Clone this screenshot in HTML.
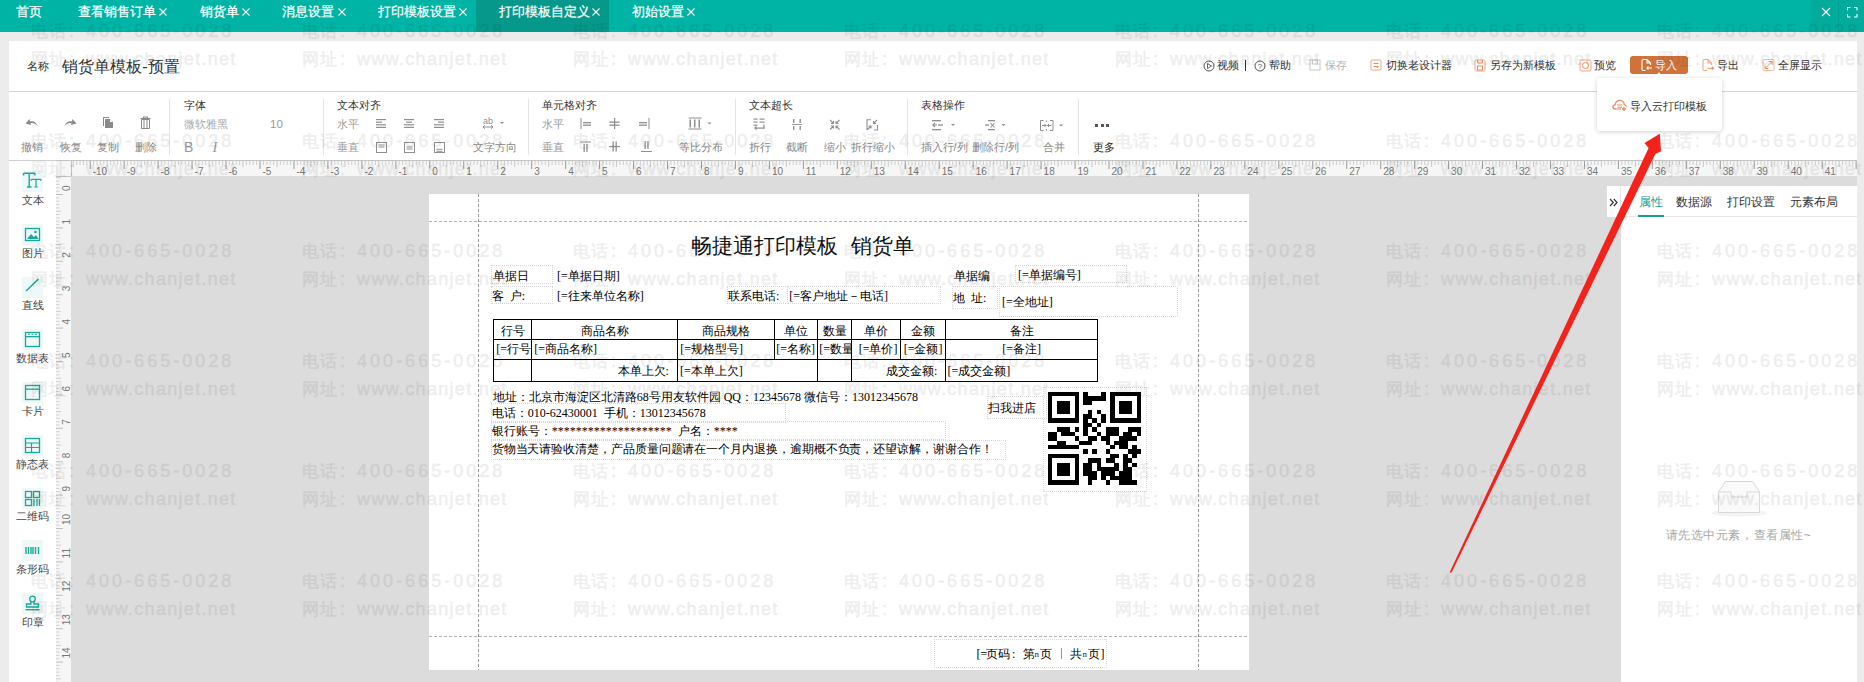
<!DOCTYPE html><html><head><meta charset="utf-8"><style>
html,body{margin:0;padding:0;width:1864px;height:682px;overflow:hidden;background:#ececec;position:relative;font-family:"Liberation Sans",sans-serif}
div{box-sizing:border-box}
</style></head><body>
<div style="position:absolute;left:0px;top:0px;width:1864px;height:32px;background:#00b4a5"></div>
<div style="position:absolute;left:476px;top:0px;width:133px;height:32px;background:#07988c"></div>
<div style="position:absolute;left:1811px;top:0px;width:27px;height:32px;background:#03ab9d"></div>
<div style="position:absolute;left:1838px;top:0px;width:26px;height:32px;background:#03ab9d;border-left:1px solid #00a194"></div>
<div style="position:absolute;left:15.8px;top:2.5px;line-height:19.049999999999997px;font-size:12.7px;color:#fff;font-family:'Liberation Sans', sans-serif;white-space:nowrap;-webkit-text-stroke:0.2px #fff">首页</div>
<div style="position:absolute;left:78.2px;top:2.5px;line-height:19.049999999999997px;font-size:12.7px;color:#fff;font-family:'Liberation Sans', sans-serif;white-space:nowrap;-webkit-text-stroke:0.2px #fff">查看销售订单</div>
<svg style="position:absolute;left:159px;top:8px" width="8" height="8"><path d="M0.5 0.5L7.5 7.5M7.5 0.5L0.5 7.5" stroke="#fff" stroke-width="1.1"/></svg>
<div style="position:absolute;left:199.9px;top:2.5px;line-height:19.049999999999997px;font-size:12.7px;color:#fff;font-family:'Liberation Sans', sans-serif;white-space:nowrap;-webkit-text-stroke:0.2px #fff">销货单</div>
<svg style="position:absolute;left:242px;top:8px" width="8" height="8"><path d="M0.5 0.5L7.5 7.5M7.5 0.5L0.5 7.5" stroke="#fff" stroke-width="1.1"/></svg>
<div style="position:absolute;left:282.0px;top:2.5px;line-height:19.049999999999997px;font-size:12.7px;color:#fff;font-family:'Liberation Sans', sans-serif;white-space:nowrap;-webkit-text-stroke:0.2px #fff">消息设置</div>
<svg style="position:absolute;left:338px;top:8px" width="8" height="8"><path d="M0.5 0.5L7.5 7.5M7.5 0.5L0.5 7.5" stroke="#fff" stroke-width="1.1"/></svg>
<div style="position:absolute;left:377.5px;top:2.5px;line-height:19.049999999999997px;font-size:12.7px;color:#fff;font-family:'Liberation Sans', sans-serif;white-space:nowrap;-webkit-text-stroke:0.2px #fff">打印模板设置</div>
<svg style="position:absolute;left:459px;top:8px" width="8" height="8"><path d="M0.5 0.5L7.5 7.5M7.5 0.5L0.5 7.5" stroke="#fff" stroke-width="1.1"/></svg>
<div style="position:absolute;left:498.5px;top:2.5px;line-height:19.049999999999997px;font-size:12.7px;color:#fff;font-family:'Liberation Sans', sans-serif;white-space:nowrap;-webkit-text-stroke:0.2px #fff">打印模板自定义</div>
<svg style="position:absolute;left:592px;top:8px" width="8" height="8"><path d="M0.5 0.5L7.5 7.5M7.5 0.5L0.5 7.5" stroke="#fff" stroke-width="1.1"/></svg>
<div style="position:absolute;left:632.0px;top:2.5px;line-height:19.049999999999997px;font-size:12.7px;color:#fff;font-family:'Liberation Sans', sans-serif;white-space:nowrap;-webkit-text-stroke:0.2px #fff">初始设置</div>
<svg style="position:absolute;left:687px;top:8px" width="8" height="8"><path d="M0.5 0.5L7.5 7.5M7.5 0.5L0.5 7.5" stroke="#fff" stroke-width="1.1"/></svg>
<svg style="position:absolute;left:1821px;top:7px" width="10" height="10"><path d="M1 1L9 9M9 1L1 9" stroke="#fff" stroke-width="1.2"/></svg>
<svg style="position:absolute;left:1846px;top:6px" width="12" height="12"><path d="M1.5 4.5V1.5H4.5M8 1.5H11V4.5M11 8V11H8M4.5 11H1.5V8" stroke="#fff" stroke-width="1.1" fill="none"/></svg>
<div style="position:absolute;left:9px;top:41px;width:1848px;height:119px;background:#fff"></div>
<div style="position:absolute;left:9px;top:91px;width:1848px;height:1px;background:#d4d4d4"></div>
<div style="position:absolute;left:9px;top:160px;width:1848px;height:1px;background:#cfcfcf"></div>
<div style="position:absolute;left:27.0px;top:58.0px;line-height:16.5px;font-size:11px;color:#333;font-family:'Liberation Sans', sans-serif;white-space:nowrap;">名称</div>
<div style="position:absolute;left:62.3px;top:53.7px;line-height:24.599999999999998px;font-size:16.4px;color:#333;font-family:'Liberation Sans', sans-serif;white-space:nowrap;">销货单模板-预置</div>
<svg style="position:absolute;left:1203px;top:60px;" width="12" height="12" viewBox="0 0 12 12"><circle cx="6" cy="6" r="5" fill="none" stroke="#555" stroke-width="1"/><path d="M4.5 3.5L8.5 6L4.5 8.5Z" fill="none" stroke="#555" stroke-width="0.9"/></svg>
<div style="position:absolute;left:1217.0px;top:57.2px;line-height:16.5px;font-size:11px;color:#333;font-family:'Liberation Sans', sans-serif;white-space:nowrap;">视频</div>
<div style="position:absolute;left:1245px;top:60px;width:1px;height:11px;background:#333"></div>
<svg style="position:absolute;left:1254px;top:60px;" width="12" height="12" viewBox="0 0 12 12"><circle cx="6" cy="6" r="5" fill="none" stroke="#555" stroke-width="1"/><text x="6" y="9" font-size="8" text-anchor="middle" fill="#555" font-family="Liberation Sans">?</text></svg>
<div style="position:absolute;left:1269.0px;top:57.2px;line-height:16.5px;font-size:11px;color:#333;font-family:'Liberation Sans', sans-serif;white-space:nowrap;">帮助</div>
<svg style="position:absolute;left:1309px;top:59px;" width="12" height="12" viewBox="0 0 12 12"><rect x="1" y="1" width="10" height="10" fill="none" stroke="#c8c8c8" stroke-width="1"/><rect x="3.5" y="1" width="5" height="4" fill="none" stroke="#c8c8c8" stroke-width="1"/></svg>
<div style="position:absolute;left:1325.0px;top:57.2px;line-height:16.5px;font-size:11px;color:#b4b4b4;font-family:'Liberation Sans', sans-serif;white-space:nowrap;">保存</div>
<svg style="position:absolute;left:1370px;top:59px;" width="13" height="12" viewBox="0 0 13 12"><rect x="1" y="1" width="10" height="10" rx="1" fill="none" stroke="#f5a58a" stroke-width="1"/><path d="M3.5 4.5H8.5M3.5 7.5H8.5L7 9" fill="none" stroke="#f08a5d" stroke-width="1"/></svg>
<div style="position:absolute;left:1386.0px;top:57.2px;line-height:16.5px;font-size:11px;color:#333;font-family:'Liberation Sans', sans-serif;white-space:nowrap;">切换老设计器</div>
<svg style="position:absolute;left:1474px;top:59px;" width="13" height="13" viewBox="0 0 13 13"><rect x="1" y="1" width="10" height="11" rx="1.5" fill="none" stroke="#f5a58a" stroke-width="1"/><rect x="3.5" y="7" width="5" height="4" fill="none" stroke="#f08a5d" stroke-width="1"/><path d="M3.5 1V4H8.5V1" fill="none" stroke="#f08a5d" stroke-width="1"/></svg>
<div style="position:absolute;left:1490.0px;top:57.2px;line-height:16.5px;font-size:11px;color:#333;font-family:'Liberation Sans', sans-serif;white-space:nowrap;">另存为新模板</div>
<svg style="position:absolute;left:1579px;top:59px;" width="13" height="13" viewBox="0 0 13 13"><rect x="1" y="1" width="11" height="11" rx="1.5" fill="none" stroke="#f5a58a" stroke-width="1"/><circle cx="6.5" cy="6.5" r="3" fill="none" stroke="#f08a5d" stroke-width="1"/></svg>
<div style="position:absolute;left:1594.0px;top:57.2px;line-height:16.5px;font-size:11px;color:#333;font-family:'Liberation Sans', sans-serif;white-space:nowrap;">预览</div>
<div style="position:absolute;left:1630px;top:56px;width:58px;height:18px;background:#d0733a;border-radius:3px"></div>
<svg style="position:absolute;left:1640px;top:58px;" width="13" height="14" viewBox="0 0 13 14"><path d="M10.5 7V5L7 1.5H3.2Q2 1.5 2 2.7V11.3Q2 12.5 3.2 12.5H5.5M7 1.5V5H10.5" fill="none" stroke="#fff" stroke-width="1.1"/><path d="M12 10H6.8M8.4 8.4L6.8 10L8.4 11.6" fill="none" stroke="#fff" stroke-width="1.1"/></svg>
<div style="position:absolute;left:1655.0px;top:56.8px;line-height:16.5px;font-size:11px;color:#fff;font-family:'Liberation Sans', sans-serif;white-space:nowrap;">导入</div>
<svg style="position:absolute;left:1701px;top:58px;" width="14" height="14" viewBox="0 0 14 14"><path d="M10.5 7V5L7 1.5H3.2Q2 1.5 2 2.7V11.3Q2 12.5 3.2 12.5H6M7 1.5V5H10.5" fill="none" stroke="#f5a58a" stroke-width="1.1"/><path d="M6.5 10.2H12.3M10.8 8.6L12.4 10.2L10.8 11.8" fill="none" stroke="#f08a5d" stroke-width="1.1"/></svg>
<div style="position:absolute;left:1717.0px;top:57.2px;line-height:16.5px;font-size:11px;color:#333;font-family:'Liberation Sans', sans-serif;white-space:nowrap;">导出</div>
<svg style="position:absolute;left:1762px;top:58px;" width="13" height="14" viewBox="0 0 13 14"><rect x="1" y="1.5" width="11" height="11" rx="1" fill="none" stroke="#f7b9a2" stroke-width="1"/><path d="M3.2 10.3L9.8 3.7M6.8 3.5H10V6.7M3 7.3V10.5H6.2" fill="none" stroke="#f08a5d" stroke-width="1"/></svg>
<div style="position:absolute;left:1778.0px;top:57.2px;line-height:16.5px;font-size:11px;color:#333;font-family:'Liberation Sans', sans-serif;white-space:nowrap;">全屏显示</div>
<div style="position:absolute;left:169px;top:99px;width:1px;height:56px;background:#e4e4e4"></div>
<div style="position:absolute;left:323px;top:99px;width:1px;height:56px;background:#e4e4e4"></div>
<div style="position:absolute;left:528px;top:99px;width:1px;height:56px;background:#e4e4e4"></div>
<div style="position:absolute;left:735px;top:99px;width:1px;height:56px;background:#e4e4e4"></div>
<div style="position:absolute;left:907px;top:99px;width:1px;height:56px;background:#e4e4e4"></div>
<div style="position:absolute;left:1078px;top:99px;width:1px;height:56px;background:#e4e4e4"></div>
<svg style="position:absolute;left:25px;top:117px;" width="14" height="11" viewBox="0 0 14 11"><path d="M12.5 9C11.5 5 8 3.5 5 4.5L4.5 2L0.5 6.5L6 8L5.5 6.2C8 5.5 10.5 6.5 12.5 9Z" fill="#8a8a8a"/></svg>
<svg style="position:absolute;left:64px;top:117px;" width="13" height="11" viewBox="0 0 13 11"><path d="M0.5 9C1.5 5 5 3.5 8 4.5L8.5 2L12.5 6.5L7 8L7.5 6.2C5 5.5 2.5 6.5 0.5 9Z" fill="#8a8a8a"/></svg>
<svg style="position:absolute;left:102px;top:116px;" width="12" height="13" viewBox="0 0 12 13"><path d="M1 1H7V2H2V10H1Z" fill="#8a8a8a"/><path d="M3 3H8L11 6V12H3Z" fill="#8a8a8a"/><path d="M8 3V6H11" fill="#fff"/></svg>
<svg style="position:absolute;left:140px;top:116px;" width="11" height="13" viewBox="0 0 11 13"><path d="M0.5 2.5H10.5M3.5 2.5V1H7.5V2.5" stroke="#8a8a8a" fill="none" stroke-width="1.2"/><path d="M1.5 3.5H9.5V12.5H1.5Z" fill="none" stroke="#8a8a8a" stroke-width="1"/><path d="M4 4V12M7 4V12" stroke="#8a8a8a" stroke-width="1"/></svg>
<div style="position:absolute;left:21.0px;top:138.8px;line-height:16.5px;font-size:11px;color:#888;font-family:'Liberation Sans', sans-serif;white-space:nowrap;">撤销</div>
<div style="position:absolute;left:60.0px;top:138.8px;line-height:16.5px;font-size:11px;color:#888;font-family:'Liberation Sans', sans-serif;white-space:nowrap;">恢复</div>
<div style="position:absolute;left:97.4px;top:138.8px;line-height:16.5px;font-size:11px;color:#888;font-family:'Liberation Sans', sans-serif;white-space:nowrap;">复制</div>
<div style="position:absolute;left:135.0px;top:138.8px;line-height:16.5px;font-size:11px;color:#888;font-family:'Liberation Sans', sans-serif;white-space:nowrap;">删除</div>
<div style="position:absolute;left:184.0px;top:96.7px;line-height:16.049999999999997px;font-size:10.7px;color:#333;font-family:'Liberation Sans', sans-serif;white-space:nowrap;">字体</div>
<div style="position:absolute;left:184.0px;top:116.0px;line-height:16.5px;font-size:11px;color:#aaa;font-family:'Liberation Sans', sans-serif;white-space:nowrap;">微软雅黑</div>
<div style="position:absolute;left:270.0px;top:115.7px;line-height:17.25px;font-size:11.5px;color:#999;font-family:'Liberation Sans', sans-serif;white-space:nowrap;">10</div>
<div style="position:absolute;left:184.0px;top:137.0px;line-height:21.0px;font-size:14px;color:#999;font-family:'Liberation Sans', sans-serif;white-space:nowrap;">B</div>
<div style="position:absolute;left:212.5px;top:136.6px;line-height:21.75px;font-size:14.5px;color:#999;font-family:'Liberation Serif', serif;white-space:nowrap;"><i>I</i></div>
<div style="position:absolute;left:337.0px;top:96.7px;line-height:16.049999999999997px;font-size:10.7px;color:#333;font-family:'Liberation Sans', sans-serif;white-space:nowrap;">文本对齐</div>
<div style="position:absolute;left:337.0px;top:116.0px;line-height:16.5px;font-size:11px;color:#999;font-family:'Liberation Sans', sans-serif;white-space:nowrap;">水平</div>
<div style="position:absolute;left:337.0px;top:138.8px;line-height:16.5px;font-size:11px;color:#999;font-family:'Liberation Sans', sans-serif;white-space:nowrap;">垂直</div>
<svg style="position:absolute;left:376px;top:118px;" width="11" height="11" viewBox="0 0 11 11"><rect x="0" y="1.0" width="10" height="1.2" fill="#8f8f8f"/><rect x="0" y="3.6" width="6" height="1.2" fill="#8f8f8f"/><rect x="0" y="6.2" width="10" height="1.2" fill="#8f8f8f"/><rect x="0" y="8.8" width="10" height="1.2" fill="#8f8f8f"/></svg>
<svg style="position:absolute;left:404px;top:118px;" width="11" height="11" viewBox="0 0 11 11"><rect x="0" y="1.0" width="10" height="1.2" fill="#8f8f8f"/><rect x="2" y="3.6" width="6" height="1.2" fill="#8f8f8f"/><rect x="0" y="6.2" width="10" height="1.2" fill="#8f8f8f"/><rect x="0" y="8.8" width="10" height="1.2" fill="#8f8f8f"/></svg>
<svg style="position:absolute;left:434px;top:118px;" width="11" height="11" viewBox="0 0 11 11"><rect x="0" y="1.0" width="10" height="1.2" fill="#8f8f8f"/><rect x="4" y="3.6" width="6" height="1.2" fill="#8f8f8f"/><rect x="0" y="6.2" width="10" height="1.2" fill="#8f8f8f"/><rect x="0" y="8.8" width="10" height="1.2" fill="#8f8f8f"/></svg>
<svg style="position:absolute;left:376px;top:142px;" width="11" height="11" viewBox="0 0 11 11"><rect x="0.5" y="0.5" width="10" height="10" fill="none" stroke="#8f8f8f" stroke-width="1"/><rect x="2.5" y="2.5" width="6" height="1" fill="#8f8f8f"/><rect x="2.5" y="4.5" width="6" height="1" fill="#8f8f8f"/></svg>
<svg style="position:absolute;left:404px;top:142px;" width="11" height="11" viewBox="0 0 11 11"><rect x="0.5" y="0.5" width="10" height="10" fill="none" stroke="#8f8f8f" stroke-width="1"/><rect x="2.5" y="4.5" width="6" height="1" fill="#8f8f8f"/><rect x="2.5" y="6.5" width="6" height="1" fill="#8f8f8f"/></svg>
<svg style="position:absolute;left:434px;top:142px;" width="11" height="11" viewBox="0 0 11 11"><rect x="0.5" y="0.5" width="10" height="10" fill="none" stroke="#8f8f8f" stroke-width="1"/><rect x="2.5" y="6.8" width="6" height="1" fill="#8f8f8f"/><rect x="2.5" y="8.8" width="6" height="1" fill="#8f8f8f"/></svg>
<svg style="position:absolute;left:482px;top:116px;" width="24" height="14" viewBox="0 0 24 14"><text x="1" y="7.5" font-size="9" fill="#8f8f8f" font-family="Liberation Sans">ab</text><path d="M1 11H11M2.8 9.3L1 11L2.8 12.7M9.2 9.3L11 11L9.2 12.7" stroke="#8f8f8f" fill="none" stroke-width="1"/><path d="M18 6H22L20 8Z" fill="#8f8f8f"/></svg>
<div style="position:absolute;left:472.8px;top:138.8px;line-height:16.5px;font-size:11px;color:#888;font-family:'Liberation Sans', sans-serif;white-space:nowrap;">文字方向</div>
<div style="position:absolute;left:542.0px;top:96.7px;line-height:16.049999999999997px;font-size:10.7px;color:#333;font-family:'Liberation Sans', sans-serif;white-space:nowrap;">单元格对齐</div>
<div style="position:absolute;left:542.0px;top:116.0px;line-height:16.5px;font-size:11px;color:#999;font-family:'Liberation Sans', sans-serif;white-space:nowrap;">水平</div>
<div style="position:absolute;left:542.0px;top:138.8px;line-height:16.5px;font-size:11px;color:#999;font-family:'Liberation Sans', sans-serif;white-space:nowrap;">垂直</div>
<svg style="position:absolute;left:580px;top:118px;" width="12" height="12" viewBox="0 0 12 12"><rect x="0.5" y="0" width="1" height="11" fill="#8f8f8f"/><rect x="3" y="4" width="8" height="1.3" fill="#8f8f8f"/><rect x="3" y="6.5" width="8" height="1.3" fill="#8f8f8f"/></svg>
<svg style="position:absolute;left:609px;top:118px;" width="12" height="12" viewBox="0 0 12 12"><rect x="5" y="0" width="1.2" height="11" fill="#8f8f8f"/><rect x="0.5" y="3.5" width="10" height="1.3" fill="#8f8f8f"/><rect x="0.5" y="6.5" width="10" height="1.3" fill="#8f8f8f"/></svg>
<svg style="position:absolute;left:639px;top:118px;" width="12" height="12" viewBox="0 0 12 12"><rect x="9.5" y="0" width="1" height="11" fill="#8f8f8f"/><rect x="0" y="4" width="8" height="1.3" fill="#8f8f8f"/><rect x="0" y="6.5" width="8" height="1.3" fill="#8f8f8f"/></svg>
<svg style="position:absolute;left:580px;top:141px;" width="12" height="12" viewBox="0 0 12 12"><rect x="0" y="0.5" width="11" height="1" fill="#8f8f8f"/><rect x="3.5" y="3" width="1.3" height="8" fill="#8f8f8f"/><rect x="6.3" y="3" width="1.3" height="8" fill="#8f8f8f"/></svg>
<svg style="position:absolute;left:609px;top:141px;" width="12" height="12" viewBox="0 0 12 12"><rect x="0" y="5" width="11" height="1.2" fill="#8f8f8f"/><rect x="3.5" y="0.5" width="1.3" height="10" fill="#8f8f8f"/><rect x="6.5" y="0.5" width="1.3" height="10" fill="#8f8f8f"/></svg>
<svg style="position:absolute;left:641px;top:141px;" width="12" height="12" viewBox="0 0 12 12"><rect x="0" y="10" width="11" height="1" fill="#8f8f8f"/><rect x="3.5" y="0" width="1.3" height="8" fill="#8f8f8f"/><rect x="6.3" y="0" width="1.3" height="8" fill="#8f8f8f"/></svg>
<svg style="position:absolute;left:688px;top:117px;" width="26" height="14" viewBox="0 0 26 14"><rect x="0.5" y="0.5" width="13" height="1" fill="#8f8f8f"/><rect x="0.5" y="11.5" width="13" height="1" fill="#8f8f8f"/><rect x="1.5" y="2.5" width="1.5" height="8" fill="#8f8f8f"/><rect x="6" y="2.5" width="1.5" height="8" fill="#8f8f8f"/><rect x="10.5" y="2.5" width="1.5" height="8" fill="#8f8f8f"/><path d="M19.5 5.5H23.5L21.5 7.5Z" fill="#8f8f8f"/></svg>
<div style="position:absolute;left:678.7px;top:138.8px;line-height:16.5px;font-size:11px;color:#888;font-family:'Liberation Sans', sans-serif;white-space:nowrap;">等比分布</div>
<div style="position:absolute;left:748.9px;top:96.7px;line-height:16.049999999999997px;font-size:10.7px;color:#333;font-family:'Liberation Sans', sans-serif;white-space:nowrap;">文本超长</div>
<svg style="position:absolute;left:753px;top:118px;" width="13" height="13" viewBox="0 0 13 13"><rect x="0.5" y="0.5" width="4" height="1.2" fill="#8f8f8f"/><rect x="6.5" y="0.5" width="5" height="1.2" fill="#8f8f8f"/><rect x="0.5" y="3.5" width="4" height="1.2" fill="#8f8f8f"/><rect x="6.5" y="3.5" width="5" height="1.2" fill="#8f8f8f"/><rect x="0.5" y="6.5" width="4" height="1.2" fill="#8f8f8f"/><rect x="10.3" y="6.5" width="1.2" height="4" fill="#8f8f8f"/><rect x="2" y="9.5" width="9.5" height="1.2" fill="#8f8f8f"/><path d="M3.5 7.5L1 10.1L3.5 12.5Z" fill="#8f8f8f"/></svg>
<svg style="position:absolute;left:792px;top:119px;" width="11" height="11" viewBox="0 0 11 11"><rect x="1" y="0" width="1.4" height="4" fill="#8f8f8f"/><rect x="7.5" y="0" width="1.4" height="4" fill="#8f8f8f"/><rect x="0" y="5" width="10" height="0.9" fill="#8f8f8f"/><rect x="1" y="7" width="1.4" height="4" fill="#8f8f8f"/><rect x="7.5" y="7" width="1.4" height="4" fill="#8f8f8f"/></svg>
<svg style="position:absolute;left:829px;top:119px;" width="12" height="12" viewBox="0 0 12 12"><path d="M1 1L4.5 4.5M4.5 2V4.5H2M10.5 1L7 4.5M7 2V4.5H9.5M1 10.5L4.5 7M2 7H4.5V9.5M10.5 10.5L7 7M9.5 7H7V9.5" stroke="#8f8f8f" fill="none" stroke-width="1.1"/></svg>
<svg style="position:absolute;left:866px;top:119px;" width="13" height="12" viewBox="0 0 13 12"><path d="M5 0.8H1V11M8 11H11.5V6M1.5 10.5L5 7M2.5 7H5V9.5M11 1L7.5 4.5M7.5 2V4.5H10" stroke="#8f8f8f" fill="none" stroke-width="1.1"/></svg>
<div style="position:absolute;left:749.0px;top:139.2px;line-height:16.5px;font-size:11px;color:#888;font-family:'Liberation Sans', sans-serif;white-space:nowrap;">折行</div>
<div style="position:absolute;left:786.0px;top:139.2px;line-height:16.5px;font-size:11px;color:#888;font-family:'Liberation Sans', sans-serif;white-space:nowrap;">截断</div>
<div style="position:absolute;left:824.0px;top:139.2px;line-height:16.5px;font-size:11px;color:#888;font-family:'Liberation Sans', sans-serif;white-space:nowrap;">缩小</div>
<div style="position:absolute;left:851.0px;top:139.2px;line-height:16.5px;font-size:11px;color:#888;font-family:'Liberation Sans', sans-serif;white-space:nowrap;">折行缩小</div>
<div style="position:absolute;left:920.6px;top:96.7px;line-height:16.049999999999997px;font-size:10.7px;color:#333;font-family:'Liberation Sans', sans-serif;white-space:nowrap;">表格操作</div>
<svg style="position:absolute;left:932px;top:120px;" width="24" height="11" viewBox="0 0 24 11"><rect x="0" y="0" width="9" height="1.3" fill="#8f8f8f"/><rect x="0" y="9" width="9" height="1.3" fill="#8f8f8f"/><path d="M0.5 5H5M3 3L0.8 5L3 7" stroke="#8f8f8f" fill="none" stroke-width="1.1"/><rect x="6" y="4.4" width="5" height="1.3" fill="#8f8f8f"/><path d="M19 4H23L21 6Z" fill="#8f8f8f"/></svg>
<svg style="position:absolute;left:985px;top:120px;" width="21" height="11" viewBox="0 0 21 11"><rect x="3" y="0" width="7" height="1.3" fill="#8f8f8f"/><rect x="3" y="9" width="7" height="1.3" fill="#8f8f8f"/><rect x="0" y="4.4" width="4" height="1.3" fill="#8f8f8f"/><path d="M5.5 3L9.5 7.5M9.5 3L5.5 7.5" stroke="#8f8f8f" stroke-width="1.1"/><path d="M16.5 4H20.5L18.5 6Z" fill="#8f8f8f"/></svg>
<svg style="position:absolute;left:1040px;top:119.5px;" width="24" height="12" viewBox="0 0 24 12"><path d="M3.5 0.5H0.5V10.5H3.5M10 0.5H13V10.5H10M6.5 0.5V2M6.5 9V10.5" stroke="#8f8f8f" fill="none" stroke-width="1"/><path d="M2 5.5H6M4.5 4L6 5.5L4.5 7M11.5 5.5H7.5M9 4L7.5 5.5L9 7" stroke="#8f8f8f" fill="none" stroke-width="1"/><path d="M19 4.5H23L21 6.5Z" fill="#8f8f8f"/></svg>
<div style="position:absolute;left:920.6px;top:139.2px;line-height:16.5px;font-size:11px;color:#888;font-family:'Liberation Sans', sans-serif;white-space:nowrap;">插入行/列</div>
<div style="position:absolute;left:972.0px;top:139.2px;line-height:16.5px;font-size:11px;color:#888;font-family:'Liberation Sans', sans-serif;white-space:nowrap;">删除行/列</div>
<div style="position:absolute;left:1043.0px;top:139.2px;line-height:16.5px;font-size:11px;color:#888;font-family:'Liberation Sans', sans-serif;white-space:nowrap;">合并</div>
<div style="position:absolute;left:1095px;top:123.8px;width:3px;height:3.0px;background:#555"></div>
<div style="position:absolute;left:1100.5px;top:123.8px;width:3.0px;height:3.0px;background:#555"></div>
<div style="position:absolute;left:1106px;top:123.8px;width:3px;height:3.0px;background:#555"></div>
<div style="position:absolute;left:1093.0px;top:139.2px;line-height:16.5px;font-size:11px;color:#222;font-family:'Liberation Sans', sans-serif;white-space:nowrap;">更多</div>
<div style="position:absolute;left:71px;top:176px;width:1786px;height:506px;background:#dcdcdc"></div>
<div style="position:absolute;left:1857px;top:160px;width:7px;height:522px;background:#ececec"></div>
<div style="position:absolute;left:9px;top:161px;width:47px;height:521px;background:#fff"></div>
<svg style="position:absolute;left:71px;top:160px;" width="1786" height="16" viewBox="0 0 1786 16"><rect x="0" y="0" width="1786" height="16" fill="#f6f6f6"/><rect x="0" y="0" width="1786" height="1" fill="#c4c4c4"/><rect x="0" y="0" width="1" height="16" fill="#c4c4c4"/><rect x="1.72" y="1" width="1" height="6" fill="#c8c8c8"/><rect x="5.12" y="1" width="1" height="4" fill="#cfcfcf"/><rect x="8.51" y="1" width="1" height="4" fill="#cfcfcf"/><rect x="11.91" y="1" width="1" height="4" fill="#cfcfcf"/><rect x="15.30" y="1" width="1" height="4" fill="#cfcfcf"/><rect x="18.70" y="1" width="1" height="8" fill="#9a9a9a"/><text x="21.70" y="14.5" font-size="10" fill="#777" font-family="Liberation Sans">-10</text><rect x="22.10" y="1" width="1" height="4" fill="#cfcfcf"/><rect x="25.49" y="1" width="1" height="4" fill="#cfcfcf"/><rect x="28.89" y="1" width="1" height="4" fill="#cfcfcf"/><rect x="32.28" y="1" width="1" height="4" fill="#cfcfcf"/><rect x="35.68" y="1" width="1" height="6" fill="#c8c8c8"/><rect x="39.08" y="1" width="1" height="4" fill="#cfcfcf"/><rect x="42.47" y="1" width="1" height="4" fill="#cfcfcf"/><rect x="45.87" y="1" width="1" height="4" fill="#cfcfcf"/><rect x="49.26" y="1" width="1" height="4" fill="#cfcfcf"/><rect x="52.66" y="1" width="1" height="8" fill="#9a9a9a"/><text x="55.66" y="14.5" font-size="10" fill="#777" font-family="Liberation Sans">-9</text><rect x="56.06" y="1" width="1" height="4" fill="#cfcfcf"/><rect x="59.45" y="1" width="1" height="4" fill="#cfcfcf"/><rect x="62.85" y="1" width="1" height="4" fill="#cfcfcf"/><rect x="66.24" y="1" width="1" height="4" fill="#cfcfcf"/><rect x="69.64" y="1" width="1" height="6" fill="#c8c8c8"/><rect x="73.04" y="1" width="1" height="4" fill="#cfcfcf"/><rect x="76.43" y="1" width="1" height="4" fill="#cfcfcf"/><rect x="79.83" y="1" width="1" height="4" fill="#cfcfcf"/><rect x="83.22" y="1" width="1" height="4" fill="#cfcfcf"/><rect x="86.62" y="1" width="1" height="8" fill="#9a9a9a"/><text x="89.62" y="14.5" font-size="10" fill="#777" font-family="Liberation Sans">-8</text><rect x="90.02" y="1" width="1" height="4" fill="#cfcfcf"/><rect x="93.41" y="1" width="1" height="4" fill="#cfcfcf"/><rect x="96.81" y="1" width="1" height="4" fill="#cfcfcf"/><rect x="100.20" y="1" width="1" height="4" fill="#cfcfcf"/><rect x="103.60" y="1" width="1" height="6" fill="#c8c8c8"/><rect x="107.00" y="1" width="1" height="4" fill="#cfcfcf"/><rect x="110.39" y="1" width="1" height="4" fill="#cfcfcf"/><rect x="113.79" y="1" width="1" height="4" fill="#cfcfcf"/><rect x="117.18" y="1" width="1" height="4" fill="#cfcfcf"/><rect x="120.58" y="1" width="1" height="8" fill="#9a9a9a"/><text x="123.58" y="14.5" font-size="10" fill="#777" font-family="Liberation Sans">-7</text><rect x="123.98" y="1" width="1" height="4" fill="#cfcfcf"/><rect x="127.37" y="1" width="1" height="4" fill="#cfcfcf"/><rect x="130.77" y="1" width="1" height="4" fill="#cfcfcf"/><rect x="134.16" y="1" width="1" height="4" fill="#cfcfcf"/><rect x="137.56" y="1" width="1" height="6" fill="#c8c8c8"/><rect x="140.96" y="1" width="1" height="4" fill="#cfcfcf"/><rect x="144.35" y="1" width="1" height="4" fill="#cfcfcf"/><rect x="147.75" y="1" width="1" height="4" fill="#cfcfcf"/><rect x="151.14" y="1" width="1" height="4" fill="#cfcfcf"/><rect x="154.54" y="1" width="1" height="8" fill="#9a9a9a"/><text x="157.54" y="14.5" font-size="10" fill="#777" font-family="Liberation Sans">-6</text><rect x="157.94" y="1" width="1" height="4" fill="#cfcfcf"/><rect x="161.33" y="1" width="1" height="4" fill="#cfcfcf"/><rect x="164.73" y="1" width="1" height="4" fill="#cfcfcf"/><rect x="168.12" y="1" width="1" height="4" fill="#cfcfcf"/><rect x="171.52" y="1" width="1" height="6" fill="#c8c8c8"/><rect x="174.92" y="1" width="1" height="4" fill="#cfcfcf"/><rect x="178.31" y="1" width="1" height="4" fill="#cfcfcf"/><rect x="181.71" y="1" width="1" height="4" fill="#cfcfcf"/><rect x="185.10" y="1" width="1" height="4" fill="#cfcfcf"/><rect x="188.50" y="1" width="1" height="8" fill="#9a9a9a"/><text x="191.50" y="14.5" font-size="10" fill="#777" font-family="Liberation Sans">-5</text><rect x="191.90" y="1" width="1" height="4" fill="#cfcfcf"/><rect x="195.29" y="1" width="1" height="4" fill="#cfcfcf"/><rect x="198.69" y="1" width="1" height="4" fill="#cfcfcf"/><rect x="202.08" y="1" width="1" height="4" fill="#cfcfcf"/><rect x="205.48" y="1" width="1" height="6" fill="#c8c8c8"/><rect x="208.88" y="1" width="1" height="4" fill="#cfcfcf"/><rect x="212.27" y="1" width="1" height="4" fill="#cfcfcf"/><rect x="215.67" y="1" width="1" height="4" fill="#cfcfcf"/><rect x="219.06" y="1" width="1" height="4" fill="#cfcfcf"/><rect x="222.46" y="1" width="1" height="8" fill="#9a9a9a"/><text x="225.46" y="14.5" font-size="10" fill="#777" font-family="Liberation Sans">-4</text><rect x="225.86" y="1" width="1" height="4" fill="#cfcfcf"/><rect x="229.25" y="1" width="1" height="4" fill="#cfcfcf"/><rect x="232.65" y="1" width="1" height="4" fill="#cfcfcf"/><rect x="236.04" y="1" width="1" height="4" fill="#cfcfcf"/><rect x="239.44" y="1" width="1" height="6" fill="#c8c8c8"/><rect x="242.84" y="1" width="1" height="4" fill="#cfcfcf"/><rect x="246.23" y="1" width="1" height="4" fill="#cfcfcf"/><rect x="249.63" y="1" width="1" height="4" fill="#cfcfcf"/><rect x="253.02" y="1" width="1" height="4" fill="#cfcfcf"/><rect x="256.42" y="1" width="1" height="8" fill="#9a9a9a"/><text x="259.42" y="14.5" font-size="10" fill="#777" font-family="Liberation Sans">-3</text><rect x="259.82" y="1" width="1" height="4" fill="#cfcfcf"/><rect x="263.21" y="1" width="1" height="4" fill="#cfcfcf"/><rect x="266.61" y="1" width="1" height="4" fill="#cfcfcf"/><rect x="270.00" y="1" width="1" height="4" fill="#cfcfcf"/><rect x="273.40" y="1" width="1" height="6" fill="#c8c8c8"/><rect x="276.80" y="1" width="1" height="4" fill="#cfcfcf"/><rect x="280.19" y="1" width="1" height="4" fill="#cfcfcf"/><rect x="283.59" y="1" width="1" height="4" fill="#cfcfcf"/><rect x="286.98" y="1" width="1" height="4" fill="#cfcfcf"/><rect x="290.38" y="1" width="1" height="8" fill="#9a9a9a"/><text x="293.38" y="14.5" font-size="10" fill="#777" font-family="Liberation Sans">-2</text><rect x="293.78" y="1" width="1" height="4" fill="#cfcfcf"/><rect x="297.17" y="1" width="1" height="4" fill="#cfcfcf"/><rect x="300.57" y="1" width="1" height="4" fill="#cfcfcf"/><rect x="303.96" y="1" width="1" height="4" fill="#cfcfcf"/><rect x="307.36" y="1" width="1" height="6" fill="#c8c8c8"/><rect x="310.76" y="1" width="1" height="4" fill="#cfcfcf"/><rect x="314.15" y="1" width="1" height="4" fill="#cfcfcf"/><rect x="317.55" y="1" width="1" height="4" fill="#cfcfcf"/><rect x="320.94" y="1" width="1" height="4" fill="#cfcfcf"/><rect x="324.34" y="1" width="1" height="8" fill="#9a9a9a"/><text x="327.34" y="14.5" font-size="10" fill="#777" font-family="Liberation Sans">-1</text><rect x="327.74" y="1" width="1" height="4" fill="#cfcfcf"/><rect x="331.13" y="1" width="1" height="4" fill="#cfcfcf"/><rect x="334.53" y="1" width="1" height="4" fill="#cfcfcf"/><rect x="337.92" y="1" width="1" height="4" fill="#cfcfcf"/><rect x="341.32" y="1" width="1" height="6" fill="#c8c8c8"/><rect x="344.72" y="1" width="1" height="4" fill="#cfcfcf"/><rect x="348.11" y="1" width="1" height="4" fill="#cfcfcf"/><rect x="351.51" y="1" width="1" height="4" fill="#cfcfcf"/><rect x="354.90" y="1" width="1" height="4" fill="#cfcfcf"/><rect x="358.30" y="1" width="1" height="8" fill="#9a9a9a"/><text x="361.30" y="14.5" font-size="10" fill="#777" font-family="Liberation Sans">0</text><rect x="361.70" y="1" width="1" height="4" fill="#cfcfcf"/><rect x="365.09" y="1" width="1" height="4" fill="#cfcfcf"/><rect x="368.49" y="1" width="1" height="4" fill="#cfcfcf"/><rect x="371.88" y="1" width="1" height="4" fill="#cfcfcf"/><rect x="375.28" y="1" width="1" height="6" fill="#c8c8c8"/><rect x="378.68" y="1" width="1" height="4" fill="#cfcfcf"/><rect x="382.07" y="1" width="1" height="4" fill="#cfcfcf"/><rect x="385.47" y="1" width="1" height="4" fill="#cfcfcf"/><rect x="388.86" y="1" width="1" height="4" fill="#cfcfcf"/><rect x="392.26" y="1" width="1" height="8" fill="#9a9a9a"/><text x="395.26" y="14.5" font-size="10" fill="#777" font-family="Liberation Sans">1</text><rect x="395.66" y="1" width="1" height="4" fill="#cfcfcf"/><rect x="399.05" y="1" width="1" height="4" fill="#cfcfcf"/><rect x="402.45" y="1" width="1" height="4" fill="#cfcfcf"/><rect x="405.84" y="1" width="1" height="4" fill="#cfcfcf"/><rect x="409.24" y="1" width="1" height="6" fill="#c8c8c8"/><rect x="412.64" y="1" width="1" height="4" fill="#cfcfcf"/><rect x="416.03" y="1" width="1" height="4" fill="#cfcfcf"/><rect x="419.43" y="1" width="1" height="4" fill="#cfcfcf"/><rect x="422.82" y="1" width="1" height="4" fill="#cfcfcf"/><rect x="426.22" y="1" width="1" height="8" fill="#9a9a9a"/><text x="429.22" y="14.5" font-size="10" fill="#777" font-family="Liberation Sans">2</text><rect x="429.62" y="1" width="1" height="4" fill="#cfcfcf"/><rect x="433.01" y="1" width="1" height="4" fill="#cfcfcf"/><rect x="436.41" y="1" width="1" height="4" fill="#cfcfcf"/><rect x="439.80" y="1" width="1" height="4" fill="#cfcfcf"/><rect x="443.20" y="1" width="1" height="6" fill="#c8c8c8"/><rect x="446.60" y="1" width="1" height="4" fill="#cfcfcf"/><rect x="449.99" y="1" width="1" height="4" fill="#cfcfcf"/><rect x="453.39" y="1" width="1" height="4" fill="#cfcfcf"/><rect x="456.78" y="1" width="1" height="4" fill="#cfcfcf"/><rect x="460.18" y="1" width="1" height="8" fill="#9a9a9a"/><text x="463.18" y="14.5" font-size="10" fill="#777" font-family="Liberation Sans">3</text><rect x="463.58" y="1" width="1" height="4" fill="#cfcfcf"/><rect x="466.97" y="1" width="1" height="4" fill="#cfcfcf"/><rect x="470.37" y="1" width="1" height="4" fill="#cfcfcf"/><rect x="473.76" y="1" width="1" height="4" fill="#cfcfcf"/><rect x="477.16" y="1" width="1" height="6" fill="#c8c8c8"/><rect x="480.56" y="1" width="1" height="4" fill="#cfcfcf"/><rect x="483.95" y="1" width="1" height="4" fill="#cfcfcf"/><rect x="487.35" y="1" width="1" height="4" fill="#cfcfcf"/><rect x="490.74" y="1" width="1" height="4" fill="#cfcfcf"/><rect x="494.14" y="1" width="1" height="8" fill="#9a9a9a"/><text x="497.14" y="14.5" font-size="10" fill="#777" font-family="Liberation Sans">4</text><rect x="497.54" y="1" width="1" height="4" fill="#cfcfcf"/><rect x="500.93" y="1" width="1" height="4" fill="#cfcfcf"/><rect x="504.33" y="1" width="1" height="4" fill="#cfcfcf"/><rect x="507.72" y="1" width="1" height="4" fill="#cfcfcf"/><rect x="511.12" y="1" width="1" height="6" fill="#c8c8c8"/><rect x="514.52" y="1" width="1" height="4" fill="#cfcfcf"/><rect x="517.91" y="1" width="1" height="4" fill="#cfcfcf"/><rect x="521.31" y="1" width="1" height="4" fill="#cfcfcf"/><rect x="524.70" y="1" width="1" height="4" fill="#cfcfcf"/><rect x="528.10" y="1" width="1" height="8" fill="#9a9a9a"/><text x="531.10" y="14.5" font-size="10" fill="#777" font-family="Liberation Sans">5</text><rect x="531.50" y="1" width="1" height="4" fill="#cfcfcf"/><rect x="534.89" y="1" width="1" height="4" fill="#cfcfcf"/><rect x="538.29" y="1" width="1" height="4" fill="#cfcfcf"/><rect x="541.68" y="1" width="1" height="4" fill="#cfcfcf"/><rect x="545.08" y="1" width="1" height="6" fill="#c8c8c8"/><rect x="548.48" y="1" width="1" height="4" fill="#cfcfcf"/><rect x="551.87" y="1" width="1" height="4" fill="#cfcfcf"/><rect x="555.27" y="1" width="1" height="4" fill="#cfcfcf"/><rect x="558.66" y="1" width="1" height="4" fill="#cfcfcf"/><rect x="562.06" y="1" width="1" height="8" fill="#9a9a9a"/><text x="565.06" y="14.5" font-size="10" fill="#777" font-family="Liberation Sans">6</text><rect x="565.46" y="1" width="1" height="4" fill="#cfcfcf"/><rect x="568.85" y="1" width="1" height="4" fill="#cfcfcf"/><rect x="572.25" y="1" width="1" height="4" fill="#cfcfcf"/><rect x="575.64" y="1" width="1" height="4" fill="#cfcfcf"/><rect x="579.04" y="1" width="1" height="6" fill="#c8c8c8"/><rect x="582.44" y="1" width="1" height="4" fill="#cfcfcf"/><rect x="585.83" y="1" width="1" height="4" fill="#cfcfcf"/><rect x="589.23" y="1" width="1" height="4" fill="#cfcfcf"/><rect x="592.62" y="1" width="1" height="4" fill="#cfcfcf"/><rect x="596.02" y="1" width="1" height="8" fill="#9a9a9a"/><text x="599.02" y="14.5" font-size="10" fill="#777" font-family="Liberation Sans">7</text><rect x="599.42" y="1" width="1" height="4" fill="#cfcfcf"/><rect x="602.81" y="1" width="1" height="4" fill="#cfcfcf"/><rect x="606.21" y="1" width="1" height="4" fill="#cfcfcf"/><rect x="609.60" y="1" width="1" height="4" fill="#cfcfcf"/><rect x="613.00" y="1" width="1" height="6" fill="#c8c8c8"/><rect x="616.40" y="1" width="1" height="4" fill="#cfcfcf"/><rect x="619.79" y="1" width="1" height="4" fill="#cfcfcf"/><rect x="623.19" y="1" width="1" height="4" fill="#cfcfcf"/><rect x="626.58" y="1" width="1" height="4" fill="#cfcfcf"/><rect x="629.98" y="1" width="1" height="8" fill="#9a9a9a"/><text x="632.98" y="14.5" font-size="10" fill="#777" font-family="Liberation Sans">8</text><rect x="633.38" y="1" width="1" height="4" fill="#cfcfcf"/><rect x="636.77" y="1" width="1" height="4" fill="#cfcfcf"/><rect x="640.17" y="1" width="1" height="4" fill="#cfcfcf"/><rect x="643.56" y="1" width="1" height="4" fill="#cfcfcf"/><rect x="646.96" y="1" width="1" height="6" fill="#c8c8c8"/><rect x="650.36" y="1" width="1" height="4" fill="#cfcfcf"/><rect x="653.75" y="1" width="1" height="4" fill="#cfcfcf"/><rect x="657.15" y="1" width="1" height="4" fill="#cfcfcf"/><rect x="660.54" y="1" width="1" height="4" fill="#cfcfcf"/><rect x="663.94" y="1" width="1" height="8" fill="#9a9a9a"/><text x="666.94" y="14.5" font-size="10" fill="#777" font-family="Liberation Sans">9</text><rect x="667.34" y="1" width="1" height="4" fill="#cfcfcf"/><rect x="670.73" y="1" width="1" height="4" fill="#cfcfcf"/><rect x="674.13" y="1" width="1" height="4" fill="#cfcfcf"/><rect x="677.52" y="1" width="1" height="4" fill="#cfcfcf"/><rect x="680.92" y="1" width="1" height="6" fill="#c8c8c8"/><rect x="684.32" y="1" width="1" height="4" fill="#cfcfcf"/><rect x="687.71" y="1" width="1" height="4" fill="#cfcfcf"/><rect x="691.11" y="1" width="1" height="4" fill="#cfcfcf"/><rect x="694.50" y="1" width="1" height="4" fill="#cfcfcf"/><rect x="697.90" y="1" width="1" height="8" fill="#9a9a9a"/><text x="700.90" y="14.5" font-size="10" fill="#777" font-family="Liberation Sans">10</text><rect x="701.30" y="1" width="1" height="4" fill="#cfcfcf"/><rect x="704.69" y="1" width="1" height="4" fill="#cfcfcf"/><rect x="708.09" y="1" width="1" height="4" fill="#cfcfcf"/><rect x="711.48" y="1" width="1" height="4" fill="#cfcfcf"/><rect x="714.88" y="1" width="1" height="6" fill="#c8c8c8"/><rect x="718.28" y="1" width="1" height="4" fill="#cfcfcf"/><rect x="721.67" y="1" width="1" height="4" fill="#cfcfcf"/><rect x="725.07" y="1" width="1" height="4" fill="#cfcfcf"/><rect x="728.46" y="1" width="1" height="4" fill="#cfcfcf"/><rect x="731.86" y="1" width="1" height="8" fill="#9a9a9a"/><text x="734.86" y="14.5" font-size="10" fill="#777" font-family="Liberation Sans">11</text><rect x="735.26" y="1" width="1" height="4" fill="#cfcfcf"/><rect x="738.65" y="1" width="1" height="4" fill="#cfcfcf"/><rect x="742.05" y="1" width="1" height="4" fill="#cfcfcf"/><rect x="745.44" y="1" width="1" height="4" fill="#cfcfcf"/><rect x="748.84" y="1" width="1" height="6" fill="#c8c8c8"/><rect x="752.24" y="1" width="1" height="4" fill="#cfcfcf"/><rect x="755.63" y="1" width="1" height="4" fill="#cfcfcf"/><rect x="759.03" y="1" width="1" height="4" fill="#cfcfcf"/><rect x="762.42" y="1" width="1" height="4" fill="#cfcfcf"/><rect x="765.82" y="1" width="1" height="8" fill="#9a9a9a"/><text x="768.82" y="14.5" font-size="10" fill="#777" font-family="Liberation Sans">12</text><rect x="769.22" y="1" width="1" height="4" fill="#cfcfcf"/><rect x="772.61" y="1" width="1" height="4" fill="#cfcfcf"/><rect x="776.01" y="1" width="1" height="4" fill="#cfcfcf"/><rect x="779.40" y="1" width="1" height="4" fill="#cfcfcf"/><rect x="782.80" y="1" width="1" height="6" fill="#c8c8c8"/><rect x="786.20" y="1" width="1" height="4" fill="#cfcfcf"/><rect x="789.59" y="1" width="1" height="4" fill="#cfcfcf"/><rect x="792.99" y="1" width="1" height="4" fill="#cfcfcf"/><rect x="796.38" y="1" width="1" height="4" fill="#cfcfcf"/><rect x="799.78" y="1" width="1" height="8" fill="#9a9a9a"/><text x="802.78" y="14.5" font-size="10" fill="#777" font-family="Liberation Sans">13</text><rect x="803.18" y="1" width="1" height="4" fill="#cfcfcf"/><rect x="806.57" y="1" width="1" height="4" fill="#cfcfcf"/><rect x="809.97" y="1" width="1" height="4" fill="#cfcfcf"/><rect x="813.36" y="1" width="1" height="4" fill="#cfcfcf"/><rect x="816.76" y="1" width="1" height="6" fill="#c8c8c8"/><rect x="820.16" y="1" width="1" height="4" fill="#cfcfcf"/><rect x="823.55" y="1" width="1" height="4" fill="#cfcfcf"/><rect x="826.95" y="1" width="1" height="4" fill="#cfcfcf"/><rect x="830.34" y="1" width="1" height="4" fill="#cfcfcf"/><rect x="833.74" y="1" width="1" height="8" fill="#9a9a9a"/><text x="836.74" y="14.5" font-size="10" fill="#777" font-family="Liberation Sans">14</text><rect x="837.14" y="1" width="1" height="4" fill="#cfcfcf"/><rect x="840.53" y="1" width="1" height="4" fill="#cfcfcf"/><rect x="843.93" y="1" width="1" height="4" fill="#cfcfcf"/><rect x="847.32" y="1" width="1" height="4" fill="#cfcfcf"/><rect x="850.72" y="1" width="1" height="6" fill="#c8c8c8"/><rect x="854.12" y="1" width="1" height="4" fill="#cfcfcf"/><rect x="857.51" y="1" width="1" height="4" fill="#cfcfcf"/><rect x="860.91" y="1" width="1" height="4" fill="#cfcfcf"/><rect x="864.30" y="1" width="1" height="4" fill="#cfcfcf"/><rect x="867.70" y="1" width="1" height="8" fill="#9a9a9a"/><text x="870.70" y="14.5" font-size="10" fill="#777" font-family="Liberation Sans">15</text><rect x="871.10" y="1" width="1" height="4" fill="#cfcfcf"/><rect x="874.49" y="1" width="1" height="4" fill="#cfcfcf"/><rect x="877.89" y="1" width="1" height="4" fill="#cfcfcf"/><rect x="881.28" y="1" width="1" height="4" fill="#cfcfcf"/><rect x="884.68" y="1" width="1" height="6" fill="#c8c8c8"/><rect x="888.08" y="1" width="1" height="4" fill="#cfcfcf"/><rect x="891.47" y="1" width="1" height="4" fill="#cfcfcf"/><rect x="894.87" y="1" width="1" height="4" fill="#cfcfcf"/><rect x="898.26" y="1" width="1" height="4" fill="#cfcfcf"/><rect x="901.66" y="1" width="1" height="8" fill="#9a9a9a"/><text x="904.66" y="14.5" font-size="10" fill="#777" font-family="Liberation Sans">16</text><rect x="905.06" y="1" width="1" height="4" fill="#cfcfcf"/><rect x="908.45" y="1" width="1" height="4" fill="#cfcfcf"/><rect x="911.85" y="1" width="1" height="4" fill="#cfcfcf"/><rect x="915.24" y="1" width="1" height="4" fill="#cfcfcf"/><rect x="918.64" y="1" width="1" height="6" fill="#c8c8c8"/><rect x="922.04" y="1" width="1" height="4" fill="#cfcfcf"/><rect x="925.43" y="1" width="1" height="4" fill="#cfcfcf"/><rect x="928.83" y="1" width="1" height="4" fill="#cfcfcf"/><rect x="932.22" y="1" width="1" height="4" fill="#cfcfcf"/><rect x="935.62" y="1" width="1" height="8" fill="#9a9a9a"/><text x="938.62" y="14.5" font-size="10" fill="#777" font-family="Liberation Sans">17</text><rect x="939.02" y="1" width="1" height="4" fill="#cfcfcf"/><rect x="942.41" y="1" width="1" height="4" fill="#cfcfcf"/><rect x="945.81" y="1" width="1" height="4" fill="#cfcfcf"/><rect x="949.20" y="1" width="1" height="4" fill="#cfcfcf"/><rect x="952.60" y="1" width="1" height="6" fill="#c8c8c8"/><rect x="956.00" y="1" width="1" height="4" fill="#cfcfcf"/><rect x="959.39" y="1" width="1" height="4" fill="#cfcfcf"/><rect x="962.79" y="1" width="1" height="4" fill="#cfcfcf"/><rect x="966.18" y="1" width="1" height="4" fill="#cfcfcf"/><rect x="969.58" y="1" width="1" height="8" fill="#9a9a9a"/><text x="972.58" y="14.5" font-size="10" fill="#777" font-family="Liberation Sans">18</text><rect x="972.98" y="1" width="1" height="4" fill="#cfcfcf"/><rect x="976.37" y="1" width="1" height="4" fill="#cfcfcf"/><rect x="979.77" y="1" width="1" height="4" fill="#cfcfcf"/><rect x="983.16" y="1" width="1" height="4" fill="#cfcfcf"/><rect x="986.56" y="1" width="1" height="6" fill="#c8c8c8"/><rect x="989.96" y="1" width="1" height="4" fill="#cfcfcf"/><rect x="993.35" y="1" width="1" height="4" fill="#cfcfcf"/><rect x="996.75" y="1" width="1" height="4" fill="#cfcfcf"/><rect x="1000.14" y="1" width="1" height="4" fill="#cfcfcf"/><rect x="1003.54" y="1" width="1" height="8" fill="#9a9a9a"/><text x="1006.54" y="14.5" font-size="10" fill="#777" font-family="Liberation Sans">19</text><rect x="1006.94" y="1" width="1" height="4" fill="#cfcfcf"/><rect x="1010.33" y="1" width="1" height="4" fill="#cfcfcf"/><rect x="1013.73" y="1" width="1" height="4" fill="#cfcfcf"/><rect x="1017.12" y="1" width="1" height="4" fill="#cfcfcf"/><rect x="1020.52" y="1" width="1" height="6" fill="#c8c8c8"/><rect x="1023.92" y="1" width="1" height="4" fill="#cfcfcf"/><rect x="1027.31" y="1" width="1" height="4" fill="#cfcfcf"/><rect x="1030.71" y="1" width="1" height="4" fill="#cfcfcf"/><rect x="1034.10" y="1" width="1" height="4" fill="#cfcfcf"/><rect x="1037.50" y="1" width="1" height="8" fill="#9a9a9a"/><text x="1040.50" y="14.5" font-size="10" fill="#777" font-family="Liberation Sans">20</text><rect x="1040.90" y="1" width="1" height="4" fill="#cfcfcf"/><rect x="1044.29" y="1" width="1" height="4" fill="#cfcfcf"/><rect x="1047.69" y="1" width="1" height="4" fill="#cfcfcf"/><rect x="1051.08" y="1" width="1" height="4" fill="#cfcfcf"/><rect x="1054.48" y="1" width="1" height="6" fill="#c8c8c8"/><rect x="1057.88" y="1" width="1" height="4" fill="#cfcfcf"/><rect x="1061.27" y="1" width="1" height="4" fill="#cfcfcf"/><rect x="1064.67" y="1" width="1" height="4" fill="#cfcfcf"/><rect x="1068.06" y="1" width="1" height="4" fill="#cfcfcf"/><rect x="1071.46" y="1" width="1" height="8" fill="#9a9a9a"/><text x="1074.46" y="14.5" font-size="10" fill="#777" font-family="Liberation Sans">21</text><rect x="1074.86" y="1" width="1" height="4" fill="#cfcfcf"/><rect x="1078.25" y="1" width="1" height="4" fill="#cfcfcf"/><rect x="1081.65" y="1" width="1" height="4" fill="#cfcfcf"/><rect x="1085.04" y="1" width="1" height="4" fill="#cfcfcf"/><rect x="1088.44" y="1" width="1" height="6" fill="#c8c8c8"/><rect x="1091.84" y="1" width="1" height="4" fill="#cfcfcf"/><rect x="1095.23" y="1" width="1" height="4" fill="#cfcfcf"/><rect x="1098.63" y="1" width="1" height="4" fill="#cfcfcf"/><rect x="1102.02" y="1" width="1" height="4" fill="#cfcfcf"/><rect x="1105.42" y="1" width="1" height="8" fill="#9a9a9a"/><text x="1108.42" y="14.5" font-size="10" fill="#777" font-family="Liberation Sans">22</text><rect x="1108.82" y="1" width="1" height="4" fill="#cfcfcf"/><rect x="1112.21" y="1" width="1" height="4" fill="#cfcfcf"/><rect x="1115.61" y="1" width="1" height="4" fill="#cfcfcf"/><rect x="1119.00" y="1" width="1" height="4" fill="#cfcfcf"/><rect x="1122.40" y="1" width="1" height="6" fill="#c8c8c8"/><rect x="1125.80" y="1" width="1" height="4" fill="#cfcfcf"/><rect x="1129.19" y="1" width="1" height="4" fill="#cfcfcf"/><rect x="1132.59" y="1" width="1" height="4" fill="#cfcfcf"/><rect x="1135.98" y="1" width="1" height="4" fill="#cfcfcf"/><rect x="1139.38" y="1" width="1" height="8" fill="#9a9a9a"/><text x="1142.38" y="14.5" font-size="10" fill="#777" font-family="Liberation Sans">23</text><rect x="1142.78" y="1" width="1" height="4" fill="#cfcfcf"/><rect x="1146.17" y="1" width="1" height="4" fill="#cfcfcf"/><rect x="1149.57" y="1" width="1" height="4" fill="#cfcfcf"/><rect x="1152.96" y="1" width="1" height="4" fill="#cfcfcf"/><rect x="1156.36" y="1" width="1" height="6" fill="#c8c8c8"/><rect x="1159.76" y="1" width="1" height="4" fill="#cfcfcf"/><rect x="1163.15" y="1" width="1" height="4" fill="#cfcfcf"/><rect x="1166.55" y="1" width="1" height="4" fill="#cfcfcf"/><rect x="1169.94" y="1" width="1" height="4" fill="#cfcfcf"/><rect x="1173.34" y="1" width="1" height="8" fill="#9a9a9a"/><text x="1176.34" y="14.5" font-size="10" fill="#777" font-family="Liberation Sans">24</text><rect x="1176.74" y="1" width="1" height="4" fill="#cfcfcf"/><rect x="1180.13" y="1" width="1" height="4" fill="#cfcfcf"/><rect x="1183.53" y="1" width="1" height="4" fill="#cfcfcf"/><rect x="1186.92" y="1" width="1" height="4" fill="#cfcfcf"/><rect x="1190.32" y="1" width="1" height="6" fill="#c8c8c8"/><rect x="1193.72" y="1" width="1" height="4" fill="#cfcfcf"/><rect x="1197.11" y="1" width="1" height="4" fill="#cfcfcf"/><rect x="1200.51" y="1" width="1" height="4" fill="#cfcfcf"/><rect x="1203.90" y="1" width="1" height="4" fill="#cfcfcf"/><rect x="1207.30" y="1" width="1" height="8" fill="#9a9a9a"/><text x="1210.30" y="14.5" font-size="10" fill="#777" font-family="Liberation Sans">25</text><rect x="1210.70" y="1" width="1" height="4" fill="#cfcfcf"/><rect x="1214.09" y="1" width="1" height="4" fill="#cfcfcf"/><rect x="1217.49" y="1" width="1" height="4" fill="#cfcfcf"/><rect x="1220.88" y="1" width="1" height="4" fill="#cfcfcf"/><rect x="1224.28" y="1" width="1" height="6" fill="#c8c8c8"/><rect x="1227.68" y="1" width="1" height="4" fill="#cfcfcf"/><rect x="1231.07" y="1" width="1" height="4" fill="#cfcfcf"/><rect x="1234.47" y="1" width="1" height="4" fill="#cfcfcf"/><rect x="1237.86" y="1" width="1" height="4" fill="#cfcfcf"/><rect x="1241.26" y="1" width="1" height="8" fill="#9a9a9a"/><text x="1244.26" y="14.5" font-size="10" fill="#777" font-family="Liberation Sans">26</text><rect x="1244.66" y="1" width="1" height="4" fill="#cfcfcf"/><rect x="1248.05" y="1" width="1" height="4" fill="#cfcfcf"/><rect x="1251.45" y="1" width="1" height="4" fill="#cfcfcf"/><rect x="1254.84" y="1" width="1" height="4" fill="#cfcfcf"/><rect x="1258.24" y="1" width="1" height="6" fill="#c8c8c8"/><rect x="1261.64" y="1" width="1" height="4" fill="#cfcfcf"/><rect x="1265.03" y="1" width="1" height="4" fill="#cfcfcf"/><rect x="1268.43" y="1" width="1" height="4" fill="#cfcfcf"/><rect x="1271.82" y="1" width="1" height="4" fill="#cfcfcf"/><rect x="1275.22" y="1" width="1" height="8" fill="#9a9a9a"/><text x="1278.22" y="14.5" font-size="10" fill="#777" font-family="Liberation Sans">27</text><rect x="1278.62" y="1" width="1" height="4" fill="#cfcfcf"/><rect x="1282.01" y="1" width="1" height="4" fill="#cfcfcf"/><rect x="1285.41" y="1" width="1" height="4" fill="#cfcfcf"/><rect x="1288.80" y="1" width="1" height="4" fill="#cfcfcf"/><rect x="1292.20" y="1" width="1" height="6" fill="#c8c8c8"/><rect x="1295.60" y="1" width="1" height="4" fill="#cfcfcf"/><rect x="1298.99" y="1" width="1" height="4" fill="#cfcfcf"/><rect x="1302.39" y="1" width="1" height="4" fill="#cfcfcf"/><rect x="1305.78" y="1" width="1" height="4" fill="#cfcfcf"/><rect x="1309.18" y="1" width="1" height="8" fill="#9a9a9a"/><text x="1312.18" y="14.5" font-size="10" fill="#777" font-family="Liberation Sans">28</text><rect x="1312.58" y="1" width="1" height="4" fill="#cfcfcf"/><rect x="1315.97" y="1" width="1" height="4" fill="#cfcfcf"/><rect x="1319.37" y="1" width="1" height="4" fill="#cfcfcf"/><rect x="1322.76" y="1" width="1" height="4" fill="#cfcfcf"/><rect x="1326.16" y="1" width="1" height="6" fill="#c8c8c8"/><rect x="1329.56" y="1" width="1" height="4" fill="#cfcfcf"/><rect x="1332.95" y="1" width="1" height="4" fill="#cfcfcf"/><rect x="1336.35" y="1" width="1" height="4" fill="#cfcfcf"/><rect x="1339.74" y="1" width="1" height="4" fill="#cfcfcf"/><rect x="1343.14" y="1" width="1" height="8" fill="#9a9a9a"/><text x="1346.14" y="14.5" font-size="10" fill="#777" font-family="Liberation Sans">29</text><rect x="1346.54" y="1" width="1" height="4" fill="#cfcfcf"/><rect x="1349.93" y="1" width="1" height="4" fill="#cfcfcf"/><rect x="1353.33" y="1" width="1" height="4" fill="#cfcfcf"/><rect x="1356.72" y="1" width="1" height="4" fill="#cfcfcf"/><rect x="1360.12" y="1" width="1" height="6" fill="#c8c8c8"/><rect x="1363.52" y="1" width="1" height="4" fill="#cfcfcf"/><rect x="1366.91" y="1" width="1" height="4" fill="#cfcfcf"/><rect x="1370.31" y="1" width="1" height="4" fill="#cfcfcf"/><rect x="1373.70" y="1" width="1" height="4" fill="#cfcfcf"/><rect x="1377.10" y="1" width="1" height="8" fill="#9a9a9a"/><text x="1380.10" y="14.5" font-size="10" fill="#777" font-family="Liberation Sans">30</text><rect x="1380.50" y="1" width="1" height="4" fill="#cfcfcf"/><rect x="1383.89" y="1" width="1" height="4" fill="#cfcfcf"/><rect x="1387.29" y="1" width="1" height="4" fill="#cfcfcf"/><rect x="1390.68" y="1" width="1" height="4" fill="#cfcfcf"/><rect x="1394.08" y="1" width="1" height="6" fill="#c8c8c8"/><rect x="1397.48" y="1" width="1" height="4" fill="#cfcfcf"/><rect x="1400.87" y="1" width="1" height="4" fill="#cfcfcf"/><rect x="1404.27" y="1" width="1" height="4" fill="#cfcfcf"/><rect x="1407.66" y="1" width="1" height="4" fill="#cfcfcf"/><rect x="1411.06" y="1" width="1" height="8" fill="#9a9a9a"/><text x="1414.06" y="14.5" font-size="10" fill="#777" font-family="Liberation Sans">31</text><rect x="1414.46" y="1" width="1" height="4" fill="#cfcfcf"/><rect x="1417.85" y="1" width="1" height="4" fill="#cfcfcf"/><rect x="1421.25" y="1" width="1" height="4" fill="#cfcfcf"/><rect x="1424.64" y="1" width="1" height="4" fill="#cfcfcf"/><rect x="1428.04" y="1" width="1" height="6" fill="#c8c8c8"/><rect x="1431.44" y="1" width="1" height="4" fill="#cfcfcf"/><rect x="1434.83" y="1" width="1" height="4" fill="#cfcfcf"/><rect x="1438.23" y="1" width="1" height="4" fill="#cfcfcf"/><rect x="1441.62" y="1" width="1" height="4" fill="#cfcfcf"/><rect x="1445.02" y="1" width="1" height="8" fill="#9a9a9a"/><text x="1448.02" y="14.5" font-size="10" fill="#777" font-family="Liberation Sans">32</text><rect x="1448.42" y="1" width="1" height="4" fill="#cfcfcf"/><rect x="1451.81" y="1" width="1" height="4" fill="#cfcfcf"/><rect x="1455.21" y="1" width="1" height="4" fill="#cfcfcf"/><rect x="1458.60" y="1" width="1" height="4" fill="#cfcfcf"/><rect x="1462.00" y="1" width="1" height="6" fill="#c8c8c8"/><rect x="1465.40" y="1" width="1" height="4" fill="#cfcfcf"/><rect x="1468.79" y="1" width="1" height="4" fill="#cfcfcf"/><rect x="1472.19" y="1" width="1" height="4" fill="#cfcfcf"/><rect x="1475.58" y="1" width="1" height="4" fill="#cfcfcf"/><rect x="1478.98" y="1" width="1" height="8" fill="#9a9a9a"/><text x="1481.98" y="14.5" font-size="10" fill="#777" font-family="Liberation Sans">33</text><rect x="1482.38" y="1" width="1" height="4" fill="#cfcfcf"/><rect x="1485.77" y="1" width="1" height="4" fill="#cfcfcf"/><rect x="1489.17" y="1" width="1" height="4" fill="#cfcfcf"/><rect x="1492.56" y="1" width="1" height="4" fill="#cfcfcf"/><rect x="1495.96" y="1" width="1" height="6" fill="#c8c8c8"/><rect x="1499.36" y="1" width="1" height="4" fill="#cfcfcf"/><rect x="1502.75" y="1" width="1" height="4" fill="#cfcfcf"/><rect x="1506.15" y="1" width="1" height="4" fill="#cfcfcf"/><rect x="1509.54" y="1" width="1" height="4" fill="#cfcfcf"/><rect x="1512.94" y="1" width="1" height="8" fill="#9a9a9a"/><text x="1515.94" y="14.5" font-size="10" fill="#777" font-family="Liberation Sans">34</text><rect x="1516.34" y="1" width="1" height="4" fill="#cfcfcf"/><rect x="1519.73" y="1" width="1" height="4" fill="#cfcfcf"/><rect x="1523.13" y="1" width="1" height="4" fill="#cfcfcf"/><rect x="1526.52" y="1" width="1" height="4" fill="#cfcfcf"/><rect x="1529.92" y="1" width="1" height="6" fill="#c8c8c8"/><rect x="1533.32" y="1" width="1" height="4" fill="#cfcfcf"/><rect x="1536.71" y="1" width="1" height="4" fill="#cfcfcf"/><rect x="1540.11" y="1" width="1" height="4" fill="#cfcfcf"/><rect x="1543.50" y="1" width="1" height="4" fill="#cfcfcf"/><rect x="1546.90" y="1" width="1" height="8" fill="#9a9a9a"/><text x="1549.90" y="14.5" font-size="10" fill="#777" font-family="Liberation Sans">35</text><rect x="1550.30" y="1" width="1" height="4" fill="#cfcfcf"/><rect x="1553.69" y="1" width="1" height="4" fill="#cfcfcf"/><rect x="1557.09" y="1" width="1" height="4" fill="#cfcfcf"/><rect x="1560.48" y="1" width="1" height="4" fill="#cfcfcf"/><rect x="1563.88" y="1" width="1" height="6" fill="#c8c8c8"/><rect x="1567.28" y="1" width="1" height="4" fill="#cfcfcf"/><rect x="1570.67" y="1" width="1" height="4" fill="#cfcfcf"/><rect x="1574.07" y="1" width="1" height="4" fill="#cfcfcf"/><rect x="1577.46" y="1" width="1" height="4" fill="#cfcfcf"/><rect x="1580.86" y="1" width="1" height="8" fill="#9a9a9a"/><text x="1583.86" y="14.5" font-size="10" fill="#777" font-family="Liberation Sans">36</text><rect x="1584.26" y="1" width="1" height="4" fill="#cfcfcf"/><rect x="1587.65" y="1" width="1" height="4" fill="#cfcfcf"/><rect x="1591.05" y="1" width="1" height="4" fill="#cfcfcf"/><rect x="1594.44" y="1" width="1" height="4" fill="#cfcfcf"/><rect x="1597.84" y="1" width="1" height="6" fill="#c8c8c8"/><rect x="1601.24" y="1" width="1" height="4" fill="#cfcfcf"/><rect x="1604.63" y="1" width="1" height="4" fill="#cfcfcf"/><rect x="1608.03" y="1" width="1" height="4" fill="#cfcfcf"/><rect x="1611.42" y="1" width="1" height="4" fill="#cfcfcf"/><rect x="1614.82" y="1" width="1" height="8" fill="#9a9a9a"/><text x="1617.82" y="14.5" font-size="10" fill="#777" font-family="Liberation Sans">37</text><rect x="1618.22" y="1" width="1" height="4" fill="#cfcfcf"/><rect x="1621.61" y="1" width="1" height="4" fill="#cfcfcf"/><rect x="1625.01" y="1" width="1" height="4" fill="#cfcfcf"/><rect x="1628.40" y="1" width="1" height="4" fill="#cfcfcf"/><rect x="1631.80" y="1" width="1" height="6" fill="#c8c8c8"/><rect x="1635.20" y="1" width="1" height="4" fill="#cfcfcf"/><rect x="1638.59" y="1" width="1" height="4" fill="#cfcfcf"/><rect x="1641.99" y="1" width="1" height="4" fill="#cfcfcf"/><rect x="1645.38" y="1" width="1" height="4" fill="#cfcfcf"/><rect x="1648.78" y="1" width="1" height="8" fill="#9a9a9a"/><text x="1651.78" y="14.5" font-size="10" fill="#777" font-family="Liberation Sans">38</text><rect x="1652.18" y="1" width="1" height="4" fill="#cfcfcf"/><rect x="1655.57" y="1" width="1" height="4" fill="#cfcfcf"/><rect x="1658.97" y="1" width="1" height="4" fill="#cfcfcf"/><rect x="1662.36" y="1" width="1" height="4" fill="#cfcfcf"/><rect x="1665.76" y="1" width="1" height="6" fill="#c8c8c8"/><rect x="1669.16" y="1" width="1" height="4" fill="#cfcfcf"/><rect x="1672.55" y="1" width="1" height="4" fill="#cfcfcf"/><rect x="1675.95" y="1" width="1" height="4" fill="#cfcfcf"/><rect x="1679.34" y="1" width="1" height="4" fill="#cfcfcf"/><rect x="1682.74" y="1" width="1" height="8" fill="#9a9a9a"/><text x="1685.74" y="14.5" font-size="10" fill="#777" font-family="Liberation Sans">39</text><rect x="1686.14" y="1" width="1" height="4" fill="#cfcfcf"/><rect x="1689.53" y="1" width="1" height="4" fill="#cfcfcf"/><rect x="1692.93" y="1" width="1" height="4" fill="#cfcfcf"/><rect x="1696.32" y="1" width="1" height="4" fill="#cfcfcf"/><rect x="1699.72" y="1" width="1" height="6" fill="#c8c8c8"/><rect x="1703.12" y="1" width="1" height="4" fill="#cfcfcf"/><rect x="1706.51" y="1" width="1" height="4" fill="#cfcfcf"/><rect x="1709.91" y="1" width="1" height="4" fill="#cfcfcf"/><rect x="1713.30" y="1" width="1" height="4" fill="#cfcfcf"/><rect x="1716.70" y="1" width="1" height="8" fill="#9a9a9a"/><text x="1719.70" y="14.5" font-size="10" fill="#777" font-family="Liberation Sans">40</text><rect x="1720.10" y="1" width="1" height="4" fill="#cfcfcf"/><rect x="1723.49" y="1" width="1" height="4" fill="#cfcfcf"/><rect x="1726.89" y="1" width="1" height="4" fill="#cfcfcf"/><rect x="1730.28" y="1" width="1" height="4" fill="#cfcfcf"/><rect x="1733.68" y="1" width="1" height="6" fill="#c8c8c8"/><rect x="1737.08" y="1" width="1" height="4" fill="#cfcfcf"/><rect x="1740.47" y="1" width="1" height="4" fill="#cfcfcf"/><rect x="1743.87" y="1" width="1" height="4" fill="#cfcfcf"/><rect x="1747.26" y="1" width="1" height="4" fill="#cfcfcf"/><rect x="1750.66" y="1" width="1" height="8" fill="#9a9a9a"/><text x="1753.66" y="14.5" font-size="10" fill="#777" font-family="Liberation Sans">41</text><rect x="1754.06" y="1" width="1" height="4" fill="#cfcfcf"/><rect x="1757.45" y="1" width="1" height="4" fill="#cfcfcf"/><rect x="1760.85" y="1" width="1" height="4" fill="#cfcfcf"/><rect x="1764.24" y="1" width="1" height="4" fill="#cfcfcf"/><rect x="1767.64" y="1" width="1" height="6" fill="#c8c8c8"/><rect x="1771.04" y="1" width="1" height="4" fill="#cfcfcf"/><rect x="1774.43" y="1" width="1" height="4" fill="#cfcfcf"/><rect x="1777.83" y="1" width="1" height="4" fill="#cfcfcf"/><rect x="1781.22" y="1" width="1" height="4" fill="#cfcfcf"/><rect x="1784.62" y="1" width="1" height="8" fill="#9a9a9a"/><text x="1787.62" y="14.5" font-size="10" fill="#777" font-family="Liberation Sans">42</text></svg>
<div style="position:absolute;left:56px;top:160px;width:15px;height:16px;background:#f6f6f6;border-top:1px solid #c4c4c4"></div>
<svg style="position:absolute;left:56px;top:176px;" width="15" height="506" viewBox="0 0 15 506"><rect x="0" y="0" width="15" height="506" fill="#f6f6f6"/><rect x="0" y="0" width="15" height="1" fill="#c4c4c4"/><rect x="0" y="1.30" width="5" height="1" fill="#cccccc"/><rect x="0" y="4.64" width="3.5" height="1" fill="#d2d2d2"/><rect x="0" y="7.98" width="3.5" height="1" fill="#d2d2d2"/><rect x="0" y="11.32" width="3.5" height="1" fill="#d2d2d2"/><rect x="0" y="14.66" width="3.5" height="1" fill="#d2d2d2"/><rect x="0" y="18.00" width="7" height="1" fill="#bdbdbd"/><text transform="translate(13.5 15.00) rotate(-90)" x="0" y="0" font-size="10" fill="#777" font-family="Liberation Sans">0</text><rect x="0" y="21.34" width="3.5" height="1" fill="#d2d2d2"/><rect x="0" y="24.68" width="3.5" height="1" fill="#d2d2d2"/><rect x="0" y="28.02" width="3.5" height="1" fill="#d2d2d2"/><rect x="0" y="31.36" width="3.5" height="1" fill="#d2d2d2"/><rect x="0" y="34.70" width="5" height="1" fill="#cccccc"/><rect x="0" y="38.04" width="3.5" height="1" fill="#d2d2d2"/><rect x="0" y="41.38" width="3.5" height="1" fill="#d2d2d2"/><rect x="0" y="44.72" width="3.5" height="1" fill="#d2d2d2"/><rect x="0" y="48.06" width="3.5" height="1" fill="#d2d2d2"/><rect x="0" y="51.40" width="7" height="1" fill="#bdbdbd"/><text transform="translate(13.5 48.40) rotate(-90)" x="0" y="0" font-size="10" fill="#777" font-family="Liberation Sans">1</text><rect x="0" y="54.74" width="3.5" height="1" fill="#d2d2d2"/><rect x="0" y="58.08" width="3.5" height="1" fill="#d2d2d2"/><rect x="0" y="61.42" width="3.5" height="1" fill="#d2d2d2"/><rect x="0" y="64.76" width="3.5" height="1" fill="#d2d2d2"/><rect x="0" y="68.10" width="5" height="1" fill="#cccccc"/><rect x="0" y="71.44" width="3.5" height="1" fill="#d2d2d2"/><rect x="0" y="74.78" width="3.5" height="1" fill="#d2d2d2"/><rect x="0" y="78.12" width="3.5" height="1" fill="#d2d2d2"/><rect x="0" y="81.46" width="3.5" height="1" fill="#d2d2d2"/><rect x="0" y="84.80" width="7" height="1" fill="#bdbdbd"/><text transform="translate(13.5 81.80) rotate(-90)" x="0" y="0" font-size="10" fill="#777" font-family="Liberation Sans">2</text><rect x="0" y="88.14" width="3.5" height="1" fill="#d2d2d2"/><rect x="0" y="91.48" width="3.5" height="1" fill="#d2d2d2"/><rect x="0" y="94.82" width="3.5" height="1" fill="#d2d2d2"/><rect x="0" y="98.16" width="3.5" height="1" fill="#d2d2d2"/><rect x="0" y="101.50" width="5" height="1" fill="#cccccc"/><rect x="0" y="104.84" width="3.5" height="1" fill="#d2d2d2"/><rect x="0" y="108.18" width="3.5" height="1" fill="#d2d2d2"/><rect x="0" y="111.52" width="3.5" height="1" fill="#d2d2d2"/><rect x="0" y="114.86" width="3.5" height="1" fill="#d2d2d2"/><rect x="0" y="118.20" width="7" height="1" fill="#bdbdbd"/><text transform="translate(13.5 115.20) rotate(-90)" x="0" y="0" font-size="10" fill="#777" font-family="Liberation Sans">3</text><rect x="0" y="121.54" width="3.5" height="1" fill="#d2d2d2"/><rect x="0" y="124.88" width="3.5" height="1" fill="#d2d2d2"/><rect x="0" y="128.22" width="3.5" height="1" fill="#d2d2d2"/><rect x="0" y="131.56" width="3.5" height="1" fill="#d2d2d2"/><rect x="0" y="134.90" width="5" height="1" fill="#cccccc"/><rect x="0" y="138.24" width="3.5" height="1" fill="#d2d2d2"/><rect x="0" y="141.58" width="3.5" height="1" fill="#d2d2d2"/><rect x="0" y="144.92" width="3.5" height="1" fill="#d2d2d2"/><rect x="0" y="148.26" width="3.5" height="1" fill="#d2d2d2"/><rect x="0" y="151.60" width="7" height="1" fill="#bdbdbd"/><text transform="translate(13.5 148.60) rotate(-90)" x="0" y="0" font-size="10" fill="#777" font-family="Liberation Sans">4</text><rect x="0" y="154.94" width="3.5" height="1" fill="#d2d2d2"/><rect x="0" y="158.28" width="3.5" height="1" fill="#d2d2d2"/><rect x="0" y="161.62" width="3.5" height="1" fill="#d2d2d2"/><rect x="0" y="164.96" width="3.5" height="1" fill="#d2d2d2"/><rect x="0" y="168.30" width="5" height="1" fill="#cccccc"/><rect x="0" y="171.64" width="3.5" height="1" fill="#d2d2d2"/><rect x="0" y="174.98" width="3.5" height="1" fill="#d2d2d2"/><rect x="0" y="178.32" width="3.5" height="1" fill="#d2d2d2"/><rect x="0" y="181.66" width="3.5" height="1" fill="#d2d2d2"/><rect x="0" y="185.00" width="7" height="1" fill="#bdbdbd"/><text transform="translate(13.5 182.00) rotate(-90)" x="0" y="0" font-size="10" fill="#777" font-family="Liberation Sans">5</text><rect x="0" y="188.34" width="3.5" height="1" fill="#d2d2d2"/><rect x="0" y="191.68" width="3.5" height="1" fill="#d2d2d2"/><rect x="0" y="195.02" width="3.5" height="1" fill="#d2d2d2"/><rect x="0" y="198.36" width="3.5" height="1" fill="#d2d2d2"/><rect x="0" y="201.70" width="5" height="1" fill="#cccccc"/><rect x="0" y="205.04" width="3.5" height="1" fill="#d2d2d2"/><rect x="0" y="208.38" width="3.5" height="1" fill="#d2d2d2"/><rect x="0" y="211.72" width="3.5" height="1" fill="#d2d2d2"/><rect x="0" y="215.06" width="3.5" height="1" fill="#d2d2d2"/><rect x="0" y="218.40" width="7" height="1" fill="#bdbdbd"/><text transform="translate(13.5 215.40) rotate(-90)" x="0" y="0" font-size="10" fill="#777" font-family="Liberation Sans">6</text><rect x="0" y="221.74" width="3.5" height="1" fill="#d2d2d2"/><rect x="0" y="225.08" width="3.5" height="1" fill="#d2d2d2"/><rect x="0" y="228.42" width="3.5" height="1" fill="#d2d2d2"/><rect x="0" y="231.76" width="3.5" height="1" fill="#d2d2d2"/><rect x="0" y="235.10" width="5" height="1" fill="#cccccc"/><rect x="0" y="238.44" width="3.5" height="1" fill="#d2d2d2"/><rect x="0" y="241.78" width="3.5" height="1" fill="#d2d2d2"/><rect x="0" y="245.12" width="3.5" height="1" fill="#d2d2d2"/><rect x="0" y="248.46" width="3.5" height="1" fill="#d2d2d2"/><rect x="0" y="251.80" width="7" height="1" fill="#bdbdbd"/><text transform="translate(13.5 248.80) rotate(-90)" x="0" y="0" font-size="10" fill="#777" font-family="Liberation Sans">7</text><rect x="0" y="255.14" width="3.5" height="1" fill="#d2d2d2"/><rect x="0" y="258.48" width="3.5" height="1" fill="#d2d2d2"/><rect x="0" y="261.82" width="3.5" height="1" fill="#d2d2d2"/><rect x="0" y="265.16" width="3.5" height="1" fill="#d2d2d2"/><rect x="0" y="268.50" width="5" height="1" fill="#cccccc"/><rect x="0" y="271.84" width="3.5" height="1" fill="#d2d2d2"/><rect x="0" y="275.18" width="3.5" height="1" fill="#d2d2d2"/><rect x="0" y="278.52" width="3.5" height="1" fill="#d2d2d2"/><rect x="0" y="281.86" width="3.5" height="1" fill="#d2d2d2"/><rect x="0" y="285.20" width="7" height="1" fill="#bdbdbd"/><text transform="translate(13.5 282.20) rotate(-90)" x="0" y="0" font-size="10" fill="#777" font-family="Liberation Sans">8</text><rect x="0" y="288.54" width="3.5" height="1" fill="#d2d2d2"/><rect x="0" y="291.88" width="3.5" height="1" fill="#d2d2d2"/><rect x="0" y="295.22" width="3.5" height="1" fill="#d2d2d2"/><rect x="0" y="298.56" width="3.5" height="1" fill="#d2d2d2"/><rect x="0" y="301.90" width="5" height="1" fill="#cccccc"/><rect x="0" y="305.24" width="3.5" height="1" fill="#d2d2d2"/><rect x="0" y="308.58" width="3.5" height="1" fill="#d2d2d2"/><rect x="0" y="311.92" width="3.5" height="1" fill="#d2d2d2"/><rect x="0" y="315.26" width="3.5" height="1" fill="#d2d2d2"/><rect x="0" y="318.60" width="7" height="1" fill="#bdbdbd"/><text transform="translate(13.5 315.60) rotate(-90)" x="0" y="0" font-size="10" fill="#777" font-family="Liberation Sans">9</text><rect x="0" y="321.94" width="3.5" height="1" fill="#d2d2d2"/><rect x="0" y="325.28" width="3.5" height="1" fill="#d2d2d2"/><rect x="0" y="328.62" width="3.5" height="1" fill="#d2d2d2"/><rect x="0" y="331.96" width="3.5" height="1" fill="#d2d2d2"/><rect x="0" y="335.30" width="5" height="1" fill="#cccccc"/><rect x="0" y="338.64" width="3.5" height="1" fill="#d2d2d2"/><rect x="0" y="341.98" width="3.5" height="1" fill="#d2d2d2"/><rect x="0" y="345.32" width="3.5" height="1" fill="#d2d2d2"/><rect x="0" y="348.66" width="3.5" height="1" fill="#d2d2d2"/><rect x="0" y="352.00" width="7" height="1" fill="#bdbdbd"/><text transform="translate(13.5 349.00) rotate(-90)" x="0" y="0" font-size="10" fill="#777" font-family="Liberation Sans">10</text><rect x="0" y="355.34" width="3.5" height="1" fill="#d2d2d2"/><rect x="0" y="358.68" width="3.5" height="1" fill="#d2d2d2"/><rect x="0" y="362.02" width="3.5" height="1" fill="#d2d2d2"/><rect x="0" y="365.36" width="3.5" height="1" fill="#d2d2d2"/><rect x="0" y="368.70" width="5" height="1" fill="#cccccc"/><rect x="0" y="372.04" width="3.5" height="1" fill="#d2d2d2"/><rect x="0" y="375.38" width="3.5" height="1" fill="#d2d2d2"/><rect x="0" y="378.72" width="3.5" height="1" fill="#d2d2d2"/><rect x="0" y="382.06" width="3.5" height="1" fill="#d2d2d2"/><rect x="0" y="385.40" width="7" height="1" fill="#bdbdbd"/><text transform="translate(13.5 382.40) rotate(-90)" x="0" y="0" font-size="10" fill="#777" font-family="Liberation Sans">11</text><rect x="0" y="388.74" width="3.5" height="1" fill="#d2d2d2"/><rect x="0" y="392.08" width="3.5" height="1" fill="#d2d2d2"/><rect x="0" y="395.42" width="3.5" height="1" fill="#d2d2d2"/><rect x="0" y="398.76" width="3.5" height="1" fill="#d2d2d2"/><rect x="0" y="402.10" width="5" height="1" fill="#cccccc"/><rect x="0" y="405.44" width="3.5" height="1" fill="#d2d2d2"/><rect x="0" y="408.78" width="3.5" height="1" fill="#d2d2d2"/><rect x="0" y="412.12" width="3.5" height="1" fill="#d2d2d2"/><rect x="0" y="415.46" width="3.5" height="1" fill="#d2d2d2"/><rect x="0" y="418.80" width="7" height="1" fill="#bdbdbd"/><text transform="translate(13.5 415.80) rotate(-90)" x="0" y="0" font-size="10" fill="#777" font-family="Liberation Sans">12</text><rect x="0" y="422.14" width="3.5" height="1" fill="#d2d2d2"/><rect x="0" y="425.48" width="3.5" height="1" fill="#d2d2d2"/><rect x="0" y="428.82" width="3.5" height="1" fill="#d2d2d2"/><rect x="0" y="432.16" width="3.5" height="1" fill="#d2d2d2"/><rect x="0" y="435.50" width="5" height="1" fill="#cccccc"/><rect x="0" y="438.84" width="3.5" height="1" fill="#d2d2d2"/><rect x="0" y="442.18" width="3.5" height="1" fill="#d2d2d2"/><rect x="0" y="445.52" width="3.5" height="1" fill="#d2d2d2"/><rect x="0" y="448.86" width="3.5" height="1" fill="#d2d2d2"/><rect x="0" y="452.20" width="7" height="1" fill="#bdbdbd"/><text transform="translate(13.5 449.20) rotate(-90)" x="0" y="0" font-size="10" fill="#777" font-family="Liberation Sans">13</text><rect x="0" y="455.54" width="3.5" height="1" fill="#d2d2d2"/><rect x="0" y="458.88" width="3.5" height="1" fill="#d2d2d2"/><rect x="0" y="462.22" width="3.5" height="1" fill="#d2d2d2"/><rect x="0" y="465.56" width="3.5" height="1" fill="#d2d2d2"/><rect x="0" y="468.90" width="5" height="1" fill="#cccccc"/><rect x="0" y="472.24" width="3.5" height="1" fill="#d2d2d2"/><rect x="0" y="475.58" width="3.5" height="1" fill="#d2d2d2"/><rect x="0" y="478.92" width="3.5" height="1" fill="#d2d2d2"/><rect x="0" y="482.26" width="3.5" height="1" fill="#d2d2d2"/><rect x="0" y="485.60" width="7" height="1" fill="#bdbdbd"/><text transform="translate(13.5 482.60) rotate(-90)" x="0" y="0" font-size="10" fill="#777" font-family="Liberation Sans">14</text><rect x="0" y="488.94" width="3.5" height="1" fill="#d2d2d2"/><rect x="0" y="492.28" width="3.5" height="1" fill="#d2d2d2"/><rect x="0" y="495.62" width="3.5" height="1" fill="#d2d2d2"/><rect x="0" y="498.96" width="3.5" height="1" fill="#d2d2d2"/><rect x="0" y="502.30" width="5" height="1" fill="#cccccc"/><rect x="0" y="505.64" width="3.5" height="1" fill="#d2d2d2"/></svg>
<div style="position:absolute;left:22px;top:171.0px;width:21px;height:21.0px;background:#eef8f7"></div>
<svg style="position:absolute;left:22px;top:171.0px;" width="21" height="21" viewBox="0 0 21 21"><path d="M2 2.3H12.5M7.2 2V16M5 16H9.5M1.6 2V4.5M12.9 2V4.5" stroke="#1aa89a" stroke-width="1.4" fill="none"/><path d="M9.5 8.3H18.5M14 8V16M12.3 16H15.7M9.2 8V9.8M18.8 8V9.8" stroke="#1aa89a" stroke-width="1.2" fill="none"/></svg>
<div style="position:absolute;left:21.5px;top:191.8px;line-height:16.5px;font-size:11px;color:#444;font-family:'Liberation Sans', sans-serif;white-space:nowrap;">文本</div>
<div style="position:absolute;left:22px;top:223.75px;width:21px;height:21.0px;background:#eef8f7"></div>
<svg style="position:absolute;left:22px;top:223.75px;" width="21" height="21" viewBox="0 0 21 21"><rect x="3.5" y="4.5" width="14" height="12" fill="none" stroke="#1aa89a" stroke-width="1.3"/><path d="M5 15L9 10L12 13L14 11L16.5 15Z" fill="#1aa89a"/><circle cx="13.5" cy="8" r="1.3" fill="#1aa89a"/></svg>
<div style="position:absolute;left:21.5px;top:244.6px;line-height:16.5px;font-size:11px;color:#444;font-family:'Liberation Sans', sans-serif;white-space:nowrap;">图片</div>
<div style="position:absolute;left:22px;top:276.5px;width:21px;height:21.0px;background:#eef8f7"></div>
<svg style="position:absolute;left:22px;top:276.5px;" width="21" height="21" viewBox="0 0 21 21"><path d="M4 14L16.5 2" stroke="#1aa89a" stroke-width="1.4"/></svg>
<div style="position:absolute;left:21.5px;top:297.4px;line-height:16.5px;font-size:11px;color:#444;font-family:'Liberation Sans', sans-serif;white-space:nowrap;">直线</div>
<div style="position:absolute;left:22px;top:329.25px;width:21px;height:21.0px;background:#eef8f7"></div>
<svg style="position:absolute;left:22px;top:329.25px;" width="21" height="21" viewBox="0 0 21 21"><rect x="3.5" y="3.5" width="14" height="14" fill="none" stroke="#1aa89a" stroke-width="1.3"/><rect x="3.5" y="7" width="14" height="1.3" fill="#1aa89a"/><path d="M6 5.3H8M9.5 5.3H11.5M13 5.3H15" stroke="#1aa89a" stroke-width="1"/></svg>
<div style="position:absolute;left:16.0px;top:350.1px;line-height:16.5px;font-size:11px;color:#444;font-family:'Liberation Sans', sans-serif;white-space:nowrap;">数据表</div>
<div style="position:absolute;left:22px;top:382.0px;width:21px;height:21.0px;background:#eef8f7"></div>
<svg style="position:absolute;left:22px;top:382.0px;" width="21" height="21" viewBox="0 0 21 21"><rect x="3.5" y="3.5" width="14" height="14" fill="none" stroke="#1aa89a" stroke-width="1.3"/><rect x="3.5" y="6.5" width="14" height="1.3" fill="#1aa89a"/></svg>
<div style="position:absolute;left:21.5px;top:402.9px;line-height:16.5px;font-size:11px;color:#444;font-family:'Liberation Sans', sans-serif;white-space:nowrap;">卡片</div>
<div style="position:absolute;left:22px;top:434.75px;width:21px;height:21.0px;background:#eef8f7"></div>
<svg style="position:absolute;left:22px;top:434.75px;" width="21" height="21" viewBox="0 0 21 21"><rect x="3.5" y="3.5" width="14" height="14" fill="none" stroke="#1aa89a" stroke-width="1.3"/><path d="M3.5 8H17.5M3.5 12.5H17.5M9.5 8V17.5" stroke="#1aa89a" stroke-width="1.2"/></svg>
<div style="position:absolute;left:16.0px;top:455.6px;line-height:16.5px;font-size:11px;color:#444;font-family:'Liberation Sans', sans-serif;white-space:nowrap;">静态表</div>
<div style="position:absolute;left:22px;top:487.5px;width:21px;height:21.0px;background:#eef8f7"></div>
<svg style="position:absolute;left:22px;top:487.5px;" width="21" height="21" viewBox="0 0 21 21"><rect x="3.5" y="3.5" width="6" height="6" fill="none" stroke="#1aa89a" stroke-width="1.3"/><rect x="11.5" y="3.5" width="6" height="6" fill="none" stroke="#1aa89a" stroke-width="1.3"/><rect x="3.5" y="11.5" width="6" height="6" fill="none" stroke="#1aa89a" stroke-width="1.3"/><path d="M12 11V18M15 11V18M17.5 11V18" stroke="#1aa89a" stroke-width="1.3"/></svg>
<div style="position:absolute;left:16.0px;top:508.4px;line-height:16.5px;font-size:11px;color:#444;font-family:'Liberation Sans', sans-serif;white-space:nowrap;">二维码</div>
<div style="position:absolute;left:22px;top:540.25px;width:21px;height:21.0px;background:#eef8f7"></div>
<svg style="position:absolute;left:22px;top:540.25px;" width="21" height="21" viewBox="0 0 21 21"><path d="M4 7V14M6.5 7V14M9 7V14M11 7V14M13.5 7V14M16.5 7V14" stroke="#1aa89a" stroke-width="1.4"/></svg>
<div style="position:absolute;left:16.0px;top:561.1px;line-height:16.5px;font-size:11px;color:#444;font-family:'Liberation Sans', sans-serif;white-space:nowrap;">条形码</div>
<div style="position:absolute;left:22px;top:593.0px;width:21px;height:21.0px;background:#eef8f7"></div>
<svg style="position:absolute;left:22px;top:593.0px;" width="21" height="21" viewBox="0 0 21 21"><circle cx="10.5" cy="6" r="2.8" fill="none" stroke="#1aa89a" stroke-width="1.3"/><path d="M9 8.5V11H4.5V14H16.5V11H12V8.5" fill="none" stroke="#1aa89a" stroke-width="1.3"/><rect x="3.5" y="16" width="14" height="1.4" fill="#1aa89a"/></svg>
<div style="position:absolute;left:21.5px;top:613.9px;line-height:16.5px;font-size:11px;color:#444;font-family:'Liberation Sans', sans-serif;white-space:nowrap;">印章</div>
<div style="position:absolute;left:429px;top:194px;width:820px;height:476px;background:#fff"></div>
<div style="position:absolute;left:478px;top:194px;width:1px;height:476px;background-image:linear-gradient(#9a9a9a 55%,transparent 55%);background-size:1px 5px"></div>
<div style="position:absolute;left:1198px;top:194px;width:1px;height:476px;background-image:linear-gradient(#9a9a9a 55%,transparent 55%);background-size:1px 5px"></div>
<div style="position:absolute;left:429px;top:221px;width:820px;height:1px;background-image:linear-gradient(90deg,#b4b4b4 60%,transparent 60%);background-size:5px 1px"></div>
<div style="position:absolute;left:429px;top:636px;width:820px;height:1px;background-image:linear-gradient(90deg,#b4b4b4 60%,transparent 60%);background-size:5px 1px"></div>
<div style="position:absolute;left:690.7px;top:230.8px;line-height:31.5px;font-size:21px;color:#111;font-family:'Liberation Serif', serif;white-space:nowrap;">畅捷通打印模板<span style="display:inline-block;width:13px"></span>销货单</div>
<div style="position:absolute;left:491px;top:265px;width:62px;height:19px;border:1px dotted #d6d6d6"></div>
<div style="position:absolute;left:492.9px;top:266.8px;line-height:18.0px;font-size:12px;color:#000;font-family:'Liberation Serif', serif;white-space:nowrap;">单据日</div>
<div style="position:absolute;left:557.0px;top:266.8px;line-height:18.0px;font-size:12px;color:#000;font-family:'Liberation Serif', serif;white-space:nowrap;">[=单据日期]</div>
<div style="position:absolute;left:491px;top:286px;width:62px;height:18px;border:1px dotted #d6d6d6"></div>
<div style="position:absolute;left:491.8px;top:287.3px;line-height:18.0px;font-size:12px;color:#000;font-family:'Liberation Serif', serif;white-space:nowrap;">客&nbsp;&nbsp;户:</div>
<div style="position:absolute;left:557.0px;top:287.3px;line-height:18.0px;font-size:12px;color:#000;font-family:'Liberation Serif', serif;white-space:nowrap;">[=往来单位名称]</div>
<div style="position:absolute;left:726.5px;top:286.4px;width:61.5px;height:17.600000000000023px;border:1px dotted #d6d6d6"></div>
<div style="position:absolute;left:727.9px;top:287.3px;line-height:18.0px;font-size:12px;color:#000;font-family:'Liberation Serif', serif;white-space:nowrap;">联系电话:</div>
<div style="position:absolute;left:787.2px;top:286.4px;width:154.0999999999999px;height:17.600000000000023px;border:1px dotted #d6d6d6"></div>
<div style="position:absolute;left:789.3px;top:287.3px;line-height:18.0px;font-size:12px;color:#000;font-family:'Liberation Serif', serif;white-space:nowrap;">[=客户地址－电话]</div>
<div style="position:absolute;left:954.0px;top:266.8px;line-height:18.0px;font-size:12px;color:#000;font-family:'Liberation Serif', serif;white-space:nowrap;">单据编</div>
<div style="position:absolute;left:1015px;top:265px;width:112px;height:18px;border:1px dotted #d6d6d6"></div>
<div style="position:absolute;left:1018.0px;top:265.8px;line-height:18.0px;font-size:12px;color:#000;font-family:'Liberation Serif', serif;white-space:nowrap;">[=单据编号]</div>
<div style="position:absolute;left:952px;top:286.4px;width:46px;height:23.0px;border:1px dotted #d6d6d6"></div>
<div style="position:absolute;left:953.0px;top:289.0px;line-height:18.0px;font-size:12px;color:#000;font-family:'Liberation Serif', serif;white-space:nowrap;">地&nbsp;&nbsp;址:</div>
<div style="position:absolute;left:999px;top:286.4px;width:179px;height:30.600000000000023px;border:1px dotted #d6d6d6"></div>
<div style="position:absolute;left:1002.0px;top:292.7px;line-height:18.0px;font-size:12px;color:#000;font-family:'Liberation Serif', serif;white-space:nowrap;">[=全地址]</div>
<div style="position:absolute;left:493px;top:319px;width:605px;height:1.1999999999999886px;background:#000"></div>
<div style="position:absolute;left:493px;top:339px;width:605px;height:1.1999999999999886px;background:#000"></div>
<div style="position:absolute;left:493px;top:359px;width:605px;height:1.1999999999999886px;background:#000"></div>
<div style="position:absolute;left:493px;top:381px;width:605px;height:1.1999999999999886px;background:#000"></div>
<div style="position:absolute;left:493px;top:319px;width:1.1999999999999886px;height:63.19999999999999px;background:#000"></div>
<div style="position:absolute;left:531px;top:319px;width:1.2000000000000455px;height:63.19999999999999px;background:#000"></div>
<div style="position:absolute;left:677px;top:319px;width:1.2000000000000455px;height:63.19999999999999px;background:#000"></div>
<div style="position:absolute;left:774px;top:319px;width:1.2000000000000455px;height:40.5px;background:#000"></div>
<div style="position:absolute;left:817px;top:319px;width:1.2000000000000455px;height:63.19999999999999px;background:#000"></div>
<div style="position:absolute;left:851px;top:319px;width:1.2000000000000455px;height:63.19999999999999px;background:#000"></div>
<div style="position:absolute;left:900px;top:319px;width:1.2000000000000455px;height:40.5px;background:#000"></div>
<div style="position:absolute;left:945px;top:319px;width:1.2000000000000455px;height:63.19999999999999px;background:#000"></div>
<div style="position:absolute;left:1097px;top:319px;width:1.2000000000000455px;height:63.19999999999999px;background:#000"></div>
<div style="position:absolute;left:500.5px;top:322.3px;line-height:18.0px;font-size:12px;color:#000;font-family:'Liberation Serif', serif;white-space:nowrap;">行号</div>
<div style="position:absolute;left:580.5px;top:322.3px;line-height:18.0px;font-size:12px;color:#000;font-family:'Liberation Serif', serif;white-space:nowrap;">商品名称</div>
<div style="position:absolute;left:702.0px;top:322.3px;line-height:18.0px;font-size:12px;color:#000;font-family:'Liberation Serif', serif;white-space:nowrap;">商品规格</div>
<div style="position:absolute;left:784.0px;top:322.3px;line-height:18.0px;font-size:12px;color:#000;font-family:'Liberation Serif', serif;white-space:nowrap;">单位</div>
<div style="position:absolute;left:822.5px;top:322.3px;line-height:18.0px;font-size:12px;color:#000;font-family:'Liberation Serif', serif;white-space:nowrap;">数量</div>
<div style="position:absolute;left:864.0px;top:322.3px;line-height:18.0px;font-size:12px;color:#000;font-family:'Liberation Serif', serif;white-space:nowrap;">单价</div>
<div style="position:absolute;left:911.0px;top:322.3px;line-height:18.0px;font-size:12px;color:#000;font-family:'Liberation Serif', serif;white-space:nowrap;">金额</div>
<div style="position:absolute;left:1009.5px;top:322.3px;line-height:18.0px;font-size:12px;color:#000;font-family:'Liberation Serif', serif;white-space:nowrap;">备注</div>
<div style="position:absolute;left:494.2px;top:340px;width:36.80000000000001px;height:19px;overflow:hidden"><div style="position:absolute;left:2px;top:0;line-height:19px;font-size:12px;color:#000;font-family:'Liberation Serif', serif;white-space:nowrap">[=行号]</div></div>
<div style="position:absolute;left:532.2px;top:340px;width:144.79999999999995px;height:19px;overflow:hidden"><div style="position:absolute;left:2px;top:0;line-height:19px;font-size:12px;color:#000;font-family:'Liberation Serif', serif;white-space:nowrap">[=商品名称]</div></div>
<div style="position:absolute;left:678.2px;top:340px;width:95.79999999999995px;height:19px;overflow:hidden"><div style="position:absolute;left:2px;top:0;line-height:19px;font-size:12px;color:#000;font-family:'Liberation Serif', serif;white-space:nowrap">[=规格型号]</div></div>
<div style="position:absolute;left:775.2px;top:340px;width:41.799999999999955px;height:19px;overflow:hidden"><div style="position:absolute;left:1px;top:0;line-height:19px;font-size:12px;color:#000;font-family:'Liberation Serif', serif;white-space:nowrap">[=名称]</div></div>
<div style="position:absolute;left:818.2px;top:340px;width:32.799999999999955px;height:19px;overflow:hidden"><div style="position:absolute;left:1px;top:0;line-height:19px;font-size:12px;color:#000;font-family:'Liberation Serif', serif;white-space:nowrap">[=数量]</div></div>
<div style="position:absolute;left:854.2px;top:340px;width:47.799999999999955px;height:19px;overflow:hidden"><div style="position:absolute;left:0;right:0;text-align:center;top:0;line-height:19px;font-size:12px;color:#000;font-family:'Liberation Serif', serif;white-space:nowrap">[=单价]</div></div>
<div style="position:absolute;left:901.2px;top:340px;width:43.799999999999955px;height:19px;overflow:hidden"><div style="position:absolute;left:0;right:0;text-align:center;top:0;line-height:19px;font-size:12px;color:#000;font-family:'Liberation Serif', serif;white-space:nowrap">[=金额]</div></div>
<div style="position:absolute;left:946.2px;top:340px;width:150.79999999999995px;height:19px;overflow:hidden"><div style="position:absolute;left:0;right:0;text-align:center;top:0;line-height:19px;font-size:12px;color:#000;font-family:'Liberation Serif', serif;white-space:nowrap">[=备注]</div></div>
<div style="position:absolute;left:617.5px;top:361.8px;line-height:18.0px;font-size:12px;color:#000;font-family:'Liberation Serif', serif;white-space:nowrap;">本单上欠:</div>
<div style="position:absolute;left:680.0px;top:361.5px;line-height:18.0px;font-size:12px;color:#000;font-family:'Liberation Serif', serif;white-space:nowrap;">[=本单上欠]</div>
<div style="position:absolute;left:886.0px;top:361.8px;line-height:18.0px;font-size:12px;color:#000;font-family:'Liberation Serif', serif;white-space:nowrap;">成交金额:</div>
<div style="position:absolute;left:947.5px;top:361.5px;line-height:18.0px;font-size:12px;color:#000;font-family:'Liberation Serif', serif;white-space:nowrap;">[=成交金额]</div>
<div style="position:absolute;left:492.7px;top:387.8px;line-height:18.0px;font-size:12px;color:#000;font-family:'Liberation Serif', serif;white-space:nowrap;">地址：北京市海淀区北清路68号用友软件园&nbsp;QQ：12345678&nbsp;微信号：13012345678</div>
<div style="position:absolute;left:491px;top:403px;width:295px;height:19.600000000000023px;border:1px dotted #d6d6d6"></div>
<div style="position:absolute;left:491.7px;top:404.2px;line-height:18.0px;font-size:12px;color:#000;font-family:'Liberation Serif', serif;white-space:nowrap;word-spacing:3px">电话：010-62430001&nbsp;手机：13012345678</div>
<div style="position:absolute;left:491px;top:421px;width:455px;height:18.5px;border:1px dotted #d6d6d6"></div>
<div style="position:absolute;left:491.7px;top:422.3px;line-height:18.0px;font-size:12px;color:#000;font-family:'Liberation Serif', serif;white-space:nowrap;word-spacing:3px">银行账号：********************&nbsp;户名：****</div>
<div style="position:absolute;left:491px;top:439.5px;width:515px;height:20.19999999999999px;border:1px dotted #d6d6d6"></div>
<div style="position:absolute;left:491.7px;top:440.3px;line-height:18.0px;font-size:12px;color:#000;font-family:'Liberation Serif', serif;white-space:nowrap;letter-spacing:-0.075px">货物当天请验收清楚，产品质量问题请在一个月内退换，逾期概不负责，还望谅解，谢谢合作！</div>
<div style="position:absolute;left:987px;top:396px;width:60px;height:22.600000000000023px;border:1px dotted #d6d6d6"></div>
<div style="position:absolute;left:987.9px;top:398.8px;line-height:18.0px;font-size:12px;color:#000;font-family:'Liberation Serif', serif;white-space:nowrap;">扫我进店</div>
<div style="position:absolute;left:1043px;top:387px;width:104px;height:104.69999999999999px;border:1px dotted #d6d6d6"></div>
<div style="position:absolute;left:933.7px;top:639px;width:173.29999999999995px;height:29px;border:1px dotted #d6d6d6"></div>
<div style="position:absolute;left:976.5px;top:644.5px;line-height:18.0px;font-size:12px;color:#000;font-family:'Liberation Serif', serif;white-space:nowrap;">[=</div>
<div style="position:absolute;left:986.0px;top:644.5px;line-height:18.0px;font-size:12px;color:#000;font-family:'Liberation Serif', serif;white-space:nowrap;">页码</div>
<div style="position:absolute;left:1012.0px;top:644.5px;line-height:18.0px;font-size:12px;color:#000;font-family:'Liberation Serif', serif;white-space:nowrap;">:</div>
<div style="position:absolute;left:1022.5px;top:644.5px;line-height:18.0px;font-size:12px;color:#000;font-family:'Liberation Serif', serif;white-space:nowrap;">第</div>
<div style="position:absolute;left:1034.5px;top:647.8px;line-height:13.5px;font-size:9px;color:#222;font-family:'Liberation Serif', serif;white-space:nowrap;">n</div>
<div style="position:absolute;left:1040.0px;top:644.5px;line-height:18.0px;font-size:12px;color:#000;font-family:'Liberation Serif', serif;white-space:nowrap;">页</div>
<div style="position:absolute;left:1061px;top:648px;width:1px;height:11px;background:#999"></div>
<div style="position:absolute;left:1069.5px;top:644.5px;line-height:18.0px;font-size:12px;color:#000;font-family:'Liberation Serif', serif;white-space:nowrap;">共</div>
<div style="position:absolute;left:1082.5px;top:647.8px;line-height:13.5px;font-size:9px;color:#222;font-family:'Liberation Serif', serif;white-space:nowrap;">n</div>
<div style="position:absolute;left:1088.0px;top:644.5px;line-height:18.0px;font-size:12px;color:#000;font-family:'Liberation Serif', serif;white-space:nowrap;">页</div>
<div style="position:absolute;left:1100.5px;top:644.5px;line-height:18.0px;font-size:12px;color:#000;font-family:'Liberation Serif', serif;white-space:nowrap;">]</div>
<svg style="position:absolute;left:1048px;top:392px;shape-rendering:crispEdges" width="94" height="94" viewBox="0 0 94 94"><rect x="0.00" y="0.00" width="4.48" height="4.46" fill="#000"/><rect x="4.43" y="0.00" width="4.48" height="4.46" fill="#000"/><rect x="8.86" y="0.00" width="4.48" height="4.46" fill="#000"/><rect x="13.29" y="0.00" width="4.48" height="4.46" fill="#000"/><rect x="17.72" y="0.00" width="4.48" height="4.46" fill="#000"/><rect x="22.15" y="0.00" width="4.48" height="4.46" fill="#000"/><rect x="26.58" y="0.00" width="4.48" height="4.46" fill="#000"/><rect x="35.44" y="0.00" width="4.48" height="4.46" fill="#000"/><rect x="53.16" y="0.00" width="4.48" height="4.46" fill="#000"/><rect x="62.02" y="0.00" width="4.48" height="4.46" fill="#000"/><rect x="66.45" y="0.00" width="4.48" height="4.46" fill="#000"/><rect x="70.88" y="0.00" width="4.48" height="4.46" fill="#000"/><rect x="75.31" y="0.00" width="4.48" height="4.46" fill="#000"/><rect x="79.74" y="0.00" width="4.48" height="4.46" fill="#000"/><rect x="84.17" y="0.00" width="4.48" height="4.46" fill="#000"/><rect x="88.60" y="0.00" width="4.48" height="4.46" fill="#000"/><rect x="0.00" y="4.41" width="4.48" height="4.46" fill="#000"/><rect x="26.58" y="4.41" width="4.48" height="4.46" fill="#000"/><rect x="35.44" y="4.41" width="4.48" height="4.46" fill="#000"/><rect x="39.87" y="4.41" width="4.48" height="4.46" fill="#000"/><rect x="44.30" y="4.41" width="4.48" height="4.46" fill="#000"/><rect x="48.73" y="4.41" width="4.48" height="4.46" fill="#000"/><rect x="53.16" y="4.41" width="4.48" height="4.46" fill="#000"/><rect x="62.02" y="4.41" width="4.48" height="4.46" fill="#000"/><rect x="88.60" y="4.41" width="4.48" height="4.46" fill="#000"/><rect x="0.00" y="8.82" width="4.48" height="4.46" fill="#000"/><rect x="8.86" y="8.82" width="4.48" height="4.46" fill="#000"/><rect x="13.29" y="8.82" width="4.48" height="4.46" fill="#000"/><rect x="17.72" y="8.82" width="4.48" height="4.46" fill="#000"/><rect x="26.58" y="8.82" width="4.48" height="4.46" fill="#000"/><rect x="35.44" y="8.82" width="4.48" height="4.46" fill="#000"/><rect x="39.87" y="8.82" width="4.48" height="4.46" fill="#000"/><rect x="62.02" y="8.82" width="4.48" height="4.46" fill="#000"/><rect x="70.88" y="8.82" width="4.48" height="4.46" fill="#000"/><rect x="75.31" y="8.82" width="4.48" height="4.46" fill="#000"/><rect x="79.74" y="8.82" width="4.48" height="4.46" fill="#000"/><rect x="88.60" y="8.82" width="4.48" height="4.46" fill="#000"/><rect x="0.00" y="13.23" width="4.48" height="4.46" fill="#000"/><rect x="8.86" y="13.23" width="4.48" height="4.46" fill="#000"/><rect x="13.29" y="13.23" width="4.48" height="4.46" fill="#000"/><rect x="17.72" y="13.23" width="4.48" height="4.46" fill="#000"/><rect x="26.58" y="13.23" width="4.48" height="4.46" fill="#000"/><rect x="62.02" y="13.23" width="4.48" height="4.46" fill="#000"/><rect x="70.88" y="13.23" width="4.48" height="4.46" fill="#000"/><rect x="75.31" y="13.23" width="4.48" height="4.46" fill="#000"/><rect x="79.74" y="13.23" width="4.48" height="4.46" fill="#000"/><rect x="88.60" y="13.23" width="4.48" height="4.46" fill="#000"/><rect x="0.00" y="17.64" width="4.48" height="4.46" fill="#000"/><rect x="8.86" y="17.64" width="4.48" height="4.46" fill="#000"/><rect x="13.29" y="17.64" width="4.48" height="4.46" fill="#000"/><rect x="17.72" y="17.64" width="4.48" height="4.46" fill="#000"/><rect x="26.58" y="17.64" width="4.48" height="4.46" fill="#000"/><rect x="39.87" y="17.64" width="4.48" height="4.46" fill="#000"/><rect x="48.73" y="17.64" width="4.48" height="4.46" fill="#000"/><rect x="62.02" y="17.64" width="4.48" height="4.46" fill="#000"/><rect x="70.88" y="17.64" width="4.48" height="4.46" fill="#000"/><rect x="75.31" y="17.64" width="4.48" height="4.46" fill="#000"/><rect x="79.74" y="17.64" width="4.48" height="4.46" fill="#000"/><rect x="88.60" y="17.64" width="4.48" height="4.46" fill="#000"/><rect x="0.00" y="22.05" width="4.48" height="4.46" fill="#000"/><rect x="26.58" y="22.05" width="4.48" height="4.46" fill="#000"/><rect x="35.44" y="22.05" width="4.48" height="4.46" fill="#000"/><rect x="39.87" y="22.05" width="4.48" height="4.46" fill="#000"/><rect x="53.16" y="22.05" width="4.48" height="4.46" fill="#000"/><rect x="62.02" y="22.05" width="4.48" height="4.46" fill="#000"/><rect x="88.60" y="22.05" width="4.48" height="4.46" fill="#000"/><rect x="0.00" y="26.46" width="4.48" height="4.46" fill="#000"/><rect x="4.43" y="26.46" width="4.48" height="4.46" fill="#000"/><rect x="8.86" y="26.46" width="4.48" height="4.46" fill="#000"/><rect x="13.29" y="26.46" width="4.48" height="4.46" fill="#000"/><rect x="17.72" y="26.46" width="4.48" height="4.46" fill="#000"/><rect x="22.15" y="26.46" width="4.48" height="4.46" fill="#000"/><rect x="26.58" y="26.46" width="4.48" height="4.46" fill="#000"/><rect x="35.44" y="26.46" width="4.48" height="4.46" fill="#000"/><rect x="44.30" y="26.46" width="4.48" height="4.46" fill="#000"/><rect x="53.16" y="26.46" width="4.48" height="4.46" fill="#000"/><rect x="62.02" y="26.46" width="4.48" height="4.46" fill="#000"/><rect x="66.45" y="26.46" width="4.48" height="4.46" fill="#000"/><rect x="70.88" y="26.46" width="4.48" height="4.46" fill="#000"/><rect x="75.31" y="26.46" width="4.48" height="4.46" fill="#000"/><rect x="79.74" y="26.46" width="4.48" height="4.46" fill="#000"/><rect x="84.17" y="26.46" width="4.48" height="4.46" fill="#000"/><rect x="88.60" y="26.46" width="4.48" height="4.46" fill="#000"/><rect x="35.44" y="30.87" width="4.48" height="4.46" fill="#000"/><rect x="39.87" y="30.87" width="4.48" height="4.46" fill="#000"/><rect x="48.73" y="30.87" width="4.48" height="4.46" fill="#000"/><rect x="8.86" y="35.28" width="4.48" height="4.46" fill="#000"/><rect x="13.29" y="35.28" width="4.48" height="4.46" fill="#000"/><rect x="17.72" y="35.28" width="4.48" height="4.46" fill="#000"/><rect x="26.58" y="35.28" width="4.48" height="4.46" fill="#000"/><rect x="35.44" y="35.28" width="4.48" height="4.46" fill="#000"/><rect x="44.30" y="35.28" width="4.48" height="4.46" fill="#000"/><rect x="57.59" y="35.28" width="4.48" height="4.46" fill="#000"/><rect x="62.02" y="35.28" width="4.48" height="4.46" fill="#000"/><rect x="66.45" y="35.28" width="4.48" height="4.46" fill="#000"/><rect x="79.74" y="35.28" width="4.48" height="4.46" fill="#000"/><rect x="84.17" y="35.28" width="4.48" height="4.46" fill="#000"/><rect x="88.60" y="35.28" width="4.48" height="4.46" fill="#000"/><rect x="0.00" y="39.69" width="4.48" height="4.46" fill="#000"/><rect x="4.43" y="39.69" width="4.48" height="4.46" fill="#000"/><rect x="13.29" y="39.69" width="4.48" height="4.46" fill="#000"/><rect x="17.72" y="39.69" width="4.48" height="4.46" fill="#000"/><rect x="22.15" y="39.69" width="4.48" height="4.46" fill="#000"/><rect x="35.44" y="39.69" width="4.48" height="4.46" fill="#000"/><rect x="48.73" y="39.69" width="4.48" height="4.46" fill="#000"/><rect x="57.59" y="39.69" width="4.48" height="4.46" fill="#000"/><rect x="62.02" y="39.69" width="4.48" height="4.46" fill="#000"/><rect x="66.45" y="39.69" width="4.48" height="4.46" fill="#000"/><rect x="75.31" y="39.69" width="4.48" height="4.46" fill="#000"/><rect x="79.74" y="39.69" width="4.48" height="4.46" fill="#000"/><rect x="88.60" y="39.69" width="4.48" height="4.46" fill="#000"/><rect x="0.00" y="44.10" width="4.48" height="4.46" fill="#000"/><rect x="4.43" y="44.10" width="4.48" height="4.46" fill="#000"/><rect x="26.58" y="44.10" width="4.48" height="4.46" fill="#000"/><rect x="39.87" y="44.10" width="4.48" height="4.46" fill="#000"/><rect x="44.30" y="44.10" width="4.48" height="4.46" fill="#000"/><rect x="53.16" y="44.10" width="4.48" height="4.46" fill="#000"/><rect x="57.59" y="44.10" width="4.48" height="4.46" fill="#000"/><rect x="70.88" y="44.10" width="4.48" height="4.46" fill="#000"/><rect x="75.31" y="44.10" width="4.48" height="4.46" fill="#000"/><rect x="79.74" y="44.10" width="4.48" height="4.46" fill="#000"/><rect x="84.17" y="44.10" width="4.48" height="4.46" fill="#000"/><rect x="8.86" y="48.51" width="4.48" height="4.46" fill="#000"/><rect x="13.29" y="48.51" width="4.48" height="4.46" fill="#000"/><rect x="31.01" y="48.51" width="4.48" height="4.46" fill="#000"/><rect x="35.44" y="48.51" width="4.48" height="4.46" fill="#000"/><rect x="39.87" y="48.51" width="4.48" height="4.46" fill="#000"/><rect x="57.59" y="48.51" width="4.48" height="4.46" fill="#000"/><rect x="66.45" y="48.51" width="4.48" height="4.46" fill="#000"/><rect x="70.88" y="48.51" width="4.48" height="4.46" fill="#000"/><rect x="75.31" y="48.51" width="4.48" height="4.46" fill="#000"/><rect x="0.00" y="52.92" width="4.48" height="4.46" fill="#000"/><rect x="4.43" y="52.92" width="4.48" height="4.46" fill="#000"/><rect x="8.86" y="52.92" width="4.48" height="4.46" fill="#000"/><rect x="13.29" y="52.92" width="4.48" height="4.46" fill="#000"/><rect x="17.72" y="52.92" width="4.48" height="4.46" fill="#000"/><rect x="22.15" y="52.92" width="4.48" height="4.46" fill="#000"/><rect x="26.58" y="52.92" width="4.48" height="4.46" fill="#000"/><rect x="62.02" y="52.92" width="4.48" height="4.46" fill="#000"/><rect x="70.88" y="52.92" width="4.48" height="4.46" fill="#000"/><rect x="75.31" y="52.92" width="4.48" height="4.46" fill="#000"/><rect x="84.17" y="52.92" width="4.48" height="4.46" fill="#000"/><rect x="35.44" y="57.33" width="4.48" height="4.46" fill="#000"/><rect x="44.30" y="57.33" width="4.48" height="4.46" fill="#000"/><rect x="57.59" y="57.33" width="4.48" height="4.46" fill="#000"/><rect x="79.74" y="57.33" width="4.48" height="4.46" fill="#000"/><rect x="84.17" y="57.33" width="4.48" height="4.46" fill="#000"/><rect x="88.60" y="57.33" width="4.48" height="4.46" fill="#000"/><rect x="0.00" y="61.74" width="4.48" height="4.46" fill="#000"/><rect x="4.43" y="61.74" width="4.48" height="4.46" fill="#000"/><rect x="8.86" y="61.74" width="4.48" height="4.46" fill="#000"/><rect x="13.29" y="61.74" width="4.48" height="4.46" fill="#000"/><rect x="17.72" y="61.74" width="4.48" height="4.46" fill="#000"/><rect x="22.15" y="61.74" width="4.48" height="4.46" fill="#000"/><rect x="26.58" y="61.74" width="4.48" height="4.46" fill="#000"/><rect x="62.02" y="61.74" width="4.48" height="4.46" fill="#000"/><rect x="66.45" y="61.74" width="4.48" height="4.46" fill="#000"/><rect x="75.31" y="61.74" width="4.48" height="4.46" fill="#000"/><rect x="84.17" y="61.74" width="4.48" height="4.46" fill="#000"/><rect x="0.00" y="66.15" width="4.48" height="4.46" fill="#000"/><rect x="26.58" y="66.15" width="4.48" height="4.46" fill="#000"/><rect x="39.87" y="66.15" width="4.48" height="4.46" fill="#000"/><rect x="44.30" y="66.15" width="4.48" height="4.46" fill="#000"/><rect x="48.73" y="66.15" width="4.48" height="4.46" fill="#000"/><rect x="57.59" y="66.15" width="4.48" height="4.46" fill="#000"/><rect x="62.02" y="66.15" width="4.48" height="4.46" fill="#000"/><rect x="75.31" y="66.15" width="4.48" height="4.46" fill="#000"/><rect x="79.74" y="66.15" width="4.48" height="4.46" fill="#000"/><rect x="0.00" y="70.56" width="4.48" height="4.46" fill="#000"/><rect x="8.86" y="70.56" width="4.48" height="4.46" fill="#000"/><rect x="13.29" y="70.56" width="4.48" height="4.46" fill="#000"/><rect x="17.72" y="70.56" width="4.48" height="4.46" fill="#000"/><rect x="26.58" y="70.56" width="4.48" height="4.46" fill="#000"/><rect x="35.44" y="70.56" width="4.48" height="4.46" fill="#000"/><rect x="39.87" y="70.56" width="4.48" height="4.46" fill="#000"/><rect x="48.73" y="70.56" width="4.48" height="4.46" fill="#000"/><rect x="66.45" y="70.56" width="4.48" height="4.46" fill="#000"/><rect x="75.31" y="70.56" width="4.48" height="4.46" fill="#000"/><rect x="84.17" y="70.56" width="4.48" height="4.46" fill="#000"/><rect x="0.00" y="74.97" width="4.48" height="4.46" fill="#000"/><rect x="8.86" y="74.97" width="4.48" height="4.46" fill="#000"/><rect x="13.29" y="74.97" width="4.48" height="4.46" fill="#000"/><rect x="17.72" y="74.97" width="4.48" height="4.46" fill="#000"/><rect x="26.58" y="74.97" width="4.48" height="4.46" fill="#000"/><rect x="35.44" y="74.97" width="4.48" height="4.46" fill="#000"/><rect x="39.87" y="74.97" width="4.48" height="4.46" fill="#000"/><rect x="48.73" y="74.97" width="4.48" height="4.46" fill="#000"/><rect x="53.16" y="74.97" width="4.48" height="4.46" fill="#000"/><rect x="57.59" y="74.97" width="4.48" height="4.46" fill="#000"/><rect x="62.02" y="74.97" width="4.48" height="4.46" fill="#000"/><rect x="66.45" y="74.97" width="4.48" height="4.46" fill="#000"/><rect x="75.31" y="74.97" width="4.48" height="4.46" fill="#000"/><rect x="79.74" y="74.97" width="4.48" height="4.46" fill="#000"/><rect x="0.00" y="79.38" width="4.48" height="4.46" fill="#000"/><rect x="8.86" y="79.38" width="4.48" height="4.46" fill="#000"/><rect x="13.29" y="79.38" width="4.48" height="4.46" fill="#000"/><rect x="17.72" y="79.38" width="4.48" height="4.46" fill="#000"/><rect x="26.58" y="79.38" width="4.48" height="4.46" fill="#000"/><rect x="35.44" y="79.38" width="4.48" height="4.46" fill="#000"/><rect x="39.87" y="79.38" width="4.48" height="4.46" fill="#000"/><rect x="44.30" y="79.38" width="4.48" height="4.46" fill="#000"/><rect x="53.16" y="79.38" width="4.48" height="4.46" fill="#000"/><rect x="57.59" y="79.38" width="4.48" height="4.46" fill="#000"/><rect x="62.02" y="79.38" width="4.48" height="4.46" fill="#000"/><rect x="70.88" y="79.38" width="4.48" height="4.46" fill="#000"/><rect x="75.31" y="79.38" width="4.48" height="4.46" fill="#000"/><rect x="79.74" y="79.38" width="4.48" height="4.46" fill="#000"/><rect x="0.00" y="83.79" width="4.48" height="4.46" fill="#000"/><rect x="26.58" y="83.79" width="4.48" height="4.46" fill="#000"/><rect x="39.87" y="83.79" width="4.48" height="4.46" fill="#000"/><rect x="44.30" y="83.79" width="4.48" height="4.46" fill="#000"/><rect x="53.16" y="83.79" width="4.48" height="4.46" fill="#000"/><rect x="62.02" y="83.79" width="4.48" height="4.46" fill="#000"/><rect x="66.45" y="83.79" width="4.48" height="4.46" fill="#000"/><rect x="70.88" y="83.79" width="4.48" height="4.46" fill="#000"/><rect x="75.31" y="83.79" width="4.48" height="4.46" fill="#000"/><rect x="79.74" y="83.79" width="4.48" height="4.46" fill="#000"/><rect x="0.00" y="88.20" width="4.48" height="4.46" fill="#000"/><rect x="4.43" y="88.20" width="4.48" height="4.46" fill="#000"/><rect x="8.86" y="88.20" width="4.48" height="4.46" fill="#000"/><rect x="13.29" y="88.20" width="4.48" height="4.46" fill="#000"/><rect x="17.72" y="88.20" width="4.48" height="4.46" fill="#000"/><rect x="22.15" y="88.20" width="4.48" height="4.46" fill="#000"/><rect x="26.58" y="88.20" width="4.48" height="4.46" fill="#000"/><rect x="39.87" y="88.20" width="4.48" height="4.46" fill="#000"/><rect x="57.59" y="88.20" width="4.48" height="4.46" fill="#000"/><rect x="70.88" y="88.20" width="4.48" height="4.46" fill="#000"/><rect x="75.31" y="88.20" width="4.48" height="4.46" fill="#000"/><rect x="79.74" y="88.20" width="4.48" height="4.46" fill="#000"/><rect x="84.17" y="88.20" width="4.48" height="4.46" fill="#000"/></svg>
<div style="position:absolute;left:1607px;top:186px;width:14px;height:31px;background:#fff"></div>
<svg style="position:absolute;left:1609px;top:198px;" width="10" height="10" viewBox="0 0 10 10"><path d="M1 1L4.3 4.5L1 8M4.8 1L8.1 4.5L4.8 8" stroke="#333" stroke-width="1.15" fill="none"/></svg>
<div style="position:absolute;left:1620px;top:186px;width:1px;height:31px;background:#e6e6e6"></div>
<div style="position:absolute;left:1621px;top:186px;width:236px;height:496px;background:#fff"></div>
<div style="position:absolute;left:1621px;top:216px;width:236px;height:1px;background:#e8e8e8"></div>
<div style="position:absolute;left:1638px;top:215px;width:25.5px;height:2px;background:#1a9c90"></div>
<div style="position:absolute;left:1638.5px;top:192.9px;line-height:18.6px;font-size:12.4px;color:#17a394;font-family:'Liberation Sans', sans-serif;white-space:nowrap;">属性</div>
<div style="position:absolute;left:1676.0px;top:192.8px;line-height:18.450000000000003px;font-size:12.3px;color:#333;font-family:'Liberation Sans', sans-serif;white-space:nowrap;">数据源</div>
<div style="position:absolute;left:1726.7px;top:192.8px;line-height:18.450000000000003px;font-size:12.3px;color:#333;font-family:'Liberation Sans', sans-serif;white-space:nowrap;">打印设置</div>
<div style="position:absolute;left:1790.0px;top:192.8px;line-height:18.450000000000003px;font-size:12.3px;color:#333;font-family:'Liberation Sans', sans-serif;white-space:nowrap;">元素布局</div>
<svg style="position:absolute;left:1706px;top:478px;" width="66" height="42" viewBox="0 0 66 42"><ellipse cx="33" cy="35" rx="28" ry="3.5" fill="#f3f3f3"/><path d="M12.5 14L19.5 3.5H46.5L53.5 14V34.5H12.5Z" fill="#fafafa" stroke="#d9d9d9" stroke-width="1"/><path d="M12.5 14H25V19H41V14H53.5" fill="none" stroke="#d9d9d9" stroke-width="1"/></svg>
<div style="position:absolute;left:1665.7px;top:526.0px;line-height:18.0px;font-size:12px;color:#a8a8a8;font-family:'Liberation Sans', sans-serif;white-space:nowrap;letter-spacing:0.55px">请先选中元素，查看属性~</div>
<div style="position:absolute;left:1597px;top:78px;width:125px;height:53px;background:#fff;border-radius:3px;box-shadow:0 1px 5px rgba(0,0,0,0.18)"></div>
<div style="position:absolute;left:1655px;top:74px;width:8px;height:8px;background:#fff;transform:rotate(45deg);box-shadow:-1px -1px 2px rgba(0,0,0,0.06)"></div>
<svg style="position:absolute;left:1612px;top:98px;" width="16" height="14" viewBox="0 0 16 14"><path d="M4.5 11H3.2C1.8 11 1 10 1 8.8C1 7.5 2 6.6 3.2 6.6C3.6 4.2 5.5 2.3 7.8 2.3C10.2 2.3 12.1 4.3 12.3 6.7C13.5 6.9 14.3 7.8 14.3 8.8" fill="none" stroke="#f28c5e" stroke-width="1.3"/><path d="M5.3 7H10M5.3 9.3H10M4.5 11H9" stroke="#f28c5e" stroke-width="1.1"/><path d="M12 9V13M10 11H14" stroke="#f28c5e" stroke-width="1.4"/></svg>
<div style="position:absolute;left:1630.0px;top:97.8px;line-height:16.5px;font-size:11px;color:#333;font-family:'Liberation Sans', sans-serif;white-space:nowrap;">导入云打印模板</div>
<div style="position:absolute;left:0;top:0;width:1864px;height:682px;overflow:hidden;pointer-events:none;opacity:0.068"><div style="position:absolute;left:30.6px;top:15.5px;line-height:30px;font-size:18px;color:#000;white-space:nowrap;-webkit-text-stroke:0.55px #000"><span style="display:inline-block;width:38.5px;font-size:17px;letter-spacing:1px">电话</span><span style="display:inline-block;width:17px">:</span><span style="letter-spacing:3px">400-665-0028</span></div><div style="position:absolute;left:30.6px;top:44.0px;line-height:30px;font-size:18px;color:#000;white-space:nowrap;-webkit-text-stroke:0.55px #000"><span style="display:inline-block;width:38.5px;font-size:17px;letter-spacing:1px">网址</span><span style="display:inline-block;width:17px">:</span><span style="letter-spacing:1.3px">www.chanjet.net</span></div><div style="position:absolute;left:301.6px;top:15.5px;line-height:30px;font-size:18px;color:#000;white-space:nowrap;-webkit-text-stroke:0.55px #000"><span style="display:inline-block;width:38.5px;font-size:17px;letter-spacing:1px">电话</span><span style="display:inline-block;width:17px">:</span><span style="letter-spacing:3px">400-665-0028</span></div><div style="position:absolute;left:301.6px;top:44.0px;line-height:30px;font-size:18px;color:#000;white-space:nowrap;-webkit-text-stroke:0.55px #000"><span style="display:inline-block;width:38.5px;font-size:17px;letter-spacing:1px">网址</span><span style="display:inline-block;width:17px">:</span><span style="letter-spacing:1.3px">www.chanjet.net</span></div><div style="position:absolute;left:572.6px;top:15.5px;line-height:30px;font-size:18px;color:#000;white-space:nowrap;-webkit-text-stroke:0.55px #000"><span style="display:inline-block;width:38.5px;font-size:17px;letter-spacing:1px">电话</span><span style="display:inline-block;width:17px">:</span><span style="letter-spacing:3px">400-665-0028</span></div><div style="position:absolute;left:572.6px;top:44.0px;line-height:30px;font-size:18px;color:#000;white-space:nowrap;-webkit-text-stroke:0.55px #000"><span style="display:inline-block;width:38.5px;font-size:17px;letter-spacing:1px">网址</span><span style="display:inline-block;width:17px">:</span><span style="letter-spacing:1.3px">www.chanjet.net</span></div><div style="position:absolute;left:843.6px;top:15.5px;line-height:30px;font-size:18px;color:#000;white-space:nowrap;-webkit-text-stroke:0.55px #000"><span style="display:inline-block;width:38.5px;font-size:17px;letter-spacing:1px">电话</span><span style="display:inline-block;width:17px">:</span><span style="letter-spacing:3px">400-665-0028</span></div><div style="position:absolute;left:843.6px;top:44.0px;line-height:30px;font-size:18px;color:#000;white-space:nowrap;-webkit-text-stroke:0.55px #000"><span style="display:inline-block;width:38.5px;font-size:17px;letter-spacing:1px">网址</span><span style="display:inline-block;width:17px">:</span><span style="letter-spacing:1.3px">www.chanjet.net</span></div><div style="position:absolute;left:1114.6px;top:15.5px;line-height:30px;font-size:18px;color:#000;white-space:nowrap;-webkit-text-stroke:0.55px #000"><span style="display:inline-block;width:38.5px;font-size:17px;letter-spacing:1px">电话</span><span style="display:inline-block;width:17px">:</span><span style="letter-spacing:3px">400-665-0028</span></div><div style="position:absolute;left:1114.6px;top:44.0px;line-height:30px;font-size:18px;color:#000;white-space:nowrap;-webkit-text-stroke:0.55px #000"><span style="display:inline-block;width:38.5px;font-size:17px;letter-spacing:1px">网址</span><span style="display:inline-block;width:17px">:</span><span style="letter-spacing:1.3px">www.chanjet.net</span></div><div style="position:absolute;left:1385.6px;top:15.5px;line-height:30px;font-size:18px;color:#000;white-space:nowrap;-webkit-text-stroke:0.55px #000"><span style="display:inline-block;width:38.5px;font-size:17px;letter-spacing:1px">电话</span><span style="display:inline-block;width:17px">:</span><span style="letter-spacing:3px">400-665-0028</span></div><div style="position:absolute;left:1385.6px;top:44.0px;line-height:30px;font-size:18px;color:#000;white-space:nowrap;-webkit-text-stroke:0.55px #000"><span style="display:inline-block;width:38.5px;font-size:17px;letter-spacing:1px">网址</span><span style="display:inline-block;width:17px">:</span><span style="letter-spacing:1.3px">www.chanjet.net</span></div><div style="position:absolute;left:1656.6px;top:15.5px;line-height:30px;font-size:18px;color:#000;white-space:nowrap;-webkit-text-stroke:0.55px #000"><span style="display:inline-block;width:38.5px;font-size:17px;letter-spacing:1px">电话</span><span style="display:inline-block;width:17px">:</span><span style="letter-spacing:3px">400-665-0028</span></div><div style="position:absolute;left:1656.6px;top:44.0px;line-height:30px;font-size:18px;color:#000;white-space:nowrap;-webkit-text-stroke:0.55px #000"><span style="display:inline-block;width:38.5px;font-size:17px;letter-spacing:1px">网址</span><span style="display:inline-block;width:17px">:</span><span style="letter-spacing:1.3px">www.chanjet.net</span></div><div style="position:absolute;left:30.6px;top:125.5px;line-height:30px;font-size:18px;color:#000;white-space:nowrap;-webkit-text-stroke:0.55px #000"><span style="display:inline-block;width:38.5px;font-size:17px;letter-spacing:1px">电话</span><span style="display:inline-block;width:17px">:</span><span style="letter-spacing:3px">400-665-0028</span></div><div style="position:absolute;left:30.6px;top:154.0px;line-height:30px;font-size:18px;color:#000;white-space:nowrap;-webkit-text-stroke:0.55px #000"><span style="display:inline-block;width:38.5px;font-size:17px;letter-spacing:1px">网址</span><span style="display:inline-block;width:17px">:</span><span style="letter-spacing:1.3px">www.chanjet.net</span></div><div style="position:absolute;left:301.6px;top:125.5px;line-height:30px;font-size:18px;color:#000;white-space:nowrap;-webkit-text-stroke:0.55px #000"><span style="display:inline-block;width:38.5px;font-size:17px;letter-spacing:1px">电话</span><span style="display:inline-block;width:17px">:</span><span style="letter-spacing:3px">400-665-0028</span></div><div style="position:absolute;left:301.6px;top:154.0px;line-height:30px;font-size:18px;color:#000;white-space:nowrap;-webkit-text-stroke:0.55px #000"><span style="display:inline-block;width:38.5px;font-size:17px;letter-spacing:1px">网址</span><span style="display:inline-block;width:17px">:</span><span style="letter-spacing:1.3px">www.chanjet.net</span></div><div style="position:absolute;left:572.6px;top:125.5px;line-height:30px;font-size:18px;color:#000;white-space:nowrap;-webkit-text-stroke:0.55px #000"><span style="display:inline-block;width:38.5px;font-size:17px;letter-spacing:1px">电话</span><span style="display:inline-block;width:17px">:</span><span style="letter-spacing:3px">400-665-0028</span></div><div style="position:absolute;left:572.6px;top:154.0px;line-height:30px;font-size:18px;color:#000;white-space:nowrap;-webkit-text-stroke:0.55px #000"><span style="display:inline-block;width:38.5px;font-size:17px;letter-spacing:1px">网址</span><span style="display:inline-block;width:17px">:</span><span style="letter-spacing:1.3px">www.chanjet.net</span></div><div style="position:absolute;left:843.6px;top:125.5px;line-height:30px;font-size:18px;color:#000;white-space:nowrap;-webkit-text-stroke:0.55px #000"><span style="display:inline-block;width:38.5px;font-size:17px;letter-spacing:1px">电话</span><span style="display:inline-block;width:17px">:</span><span style="letter-spacing:3px">400-665-0028</span></div><div style="position:absolute;left:843.6px;top:154.0px;line-height:30px;font-size:18px;color:#000;white-space:nowrap;-webkit-text-stroke:0.55px #000"><span style="display:inline-block;width:38.5px;font-size:17px;letter-spacing:1px">网址</span><span style="display:inline-block;width:17px">:</span><span style="letter-spacing:1.3px">www.chanjet.net</span></div><div style="position:absolute;left:1114.6px;top:125.5px;line-height:30px;font-size:18px;color:#000;white-space:nowrap;-webkit-text-stroke:0.55px #000"><span style="display:inline-block;width:38.5px;font-size:17px;letter-spacing:1px">电话</span><span style="display:inline-block;width:17px">:</span><span style="letter-spacing:3px">400-665-0028</span></div><div style="position:absolute;left:1114.6px;top:154.0px;line-height:30px;font-size:18px;color:#000;white-space:nowrap;-webkit-text-stroke:0.55px #000"><span style="display:inline-block;width:38.5px;font-size:17px;letter-spacing:1px">网址</span><span style="display:inline-block;width:17px">:</span><span style="letter-spacing:1.3px">www.chanjet.net</span></div><div style="position:absolute;left:1385.6px;top:125.5px;line-height:30px;font-size:18px;color:#000;white-space:nowrap;-webkit-text-stroke:0.55px #000"><span style="display:inline-block;width:38.5px;font-size:17px;letter-spacing:1px">电话</span><span style="display:inline-block;width:17px">:</span><span style="letter-spacing:3px">400-665-0028</span></div><div style="position:absolute;left:1385.6px;top:154.0px;line-height:30px;font-size:18px;color:#000;white-space:nowrap;-webkit-text-stroke:0.55px #000"><span style="display:inline-block;width:38.5px;font-size:17px;letter-spacing:1px">网址</span><span style="display:inline-block;width:17px">:</span><span style="letter-spacing:1.3px">www.chanjet.net</span></div><div style="position:absolute;left:1656.6px;top:125.5px;line-height:30px;font-size:18px;color:#000;white-space:nowrap;-webkit-text-stroke:0.55px #000"><span style="display:inline-block;width:38.5px;font-size:17px;letter-spacing:1px">电话</span><span style="display:inline-block;width:17px">:</span><span style="letter-spacing:3px">400-665-0028</span></div><div style="position:absolute;left:1656.6px;top:154.0px;line-height:30px;font-size:18px;color:#000;white-space:nowrap;-webkit-text-stroke:0.55px #000"><span style="display:inline-block;width:38.5px;font-size:17px;letter-spacing:1px">网址</span><span style="display:inline-block;width:17px">:</span><span style="letter-spacing:1.3px">www.chanjet.net</span></div><div style="position:absolute;left:30.6px;top:235.5px;line-height:30px;font-size:18px;color:#000;white-space:nowrap;-webkit-text-stroke:0.55px #000"><span style="display:inline-block;width:38.5px;font-size:17px;letter-spacing:1px">电话</span><span style="display:inline-block;width:17px">:</span><span style="letter-spacing:3px">400-665-0028</span></div><div style="position:absolute;left:30.6px;top:264.0px;line-height:30px;font-size:18px;color:#000;white-space:nowrap;-webkit-text-stroke:0.55px #000"><span style="display:inline-block;width:38.5px;font-size:17px;letter-spacing:1px">网址</span><span style="display:inline-block;width:17px">:</span><span style="letter-spacing:1.3px">www.chanjet.net</span></div><div style="position:absolute;left:301.6px;top:235.5px;line-height:30px;font-size:18px;color:#000;white-space:nowrap;-webkit-text-stroke:0.55px #000"><span style="display:inline-block;width:38.5px;font-size:17px;letter-spacing:1px">电话</span><span style="display:inline-block;width:17px">:</span><span style="letter-spacing:3px">400-665-0028</span></div><div style="position:absolute;left:301.6px;top:264.0px;line-height:30px;font-size:18px;color:#000;white-space:nowrap;-webkit-text-stroke:0.55px #000"><span style="display:inline-block;width:38.5px;font-size:17px;letter-spacing:1px">网址</span><span style="display:inline-block;width:17px">:</span><span style="letter-spacing:1.3px">www.chanjet.net</span></div><div style="position:absolute;left:572.6px;top:235.5px;line-height:30px;font-size:18px;color:#000;white-space:nowrap;-webkit-text-stroke:0.55px #000"><span style="display:inline-block;width:38.5px;font-size:17px;letter-spacing:1px">电话</span><span style="display:inline-block;width:17px">:</span><span style="letter-spacing:3px">400-665-0028</span></div><div style="position:absolute;left:572.6px;top:264.0px;line-height:30px;font-size:18px;color:#000;white-space:nowrap;-webkit-text-stroke:0.55px #000"><span style="display:inline-block;width:38.5px;font-size:17px;letter-spacing:1px">网址</span><span style="display:inline-block;width:17px">:</span><span style="letter-spacing:1.3px">www.chanjet.net</span></div><div style="position:absolute;left:843.6px;top:235.5px;line-height:30px;font-size:18px;color:#000;white-space:nowrap;-webkit-text-stroke:0.55px #000"><span style="display:inline-block;width:38.5px;font-size:17px;letter-spacing:1px">电话</span><span style="display:inline-block;width:17px">:</span><span style="letter-spacing:3px">400-665-0028</span></div><div style="position:absolute;left:843.6px;top:264.0px;line-height:30px;font-size:18px;color:#000;white-space:nowrap;-webkit-text-stroke:0.55px #000"><span style="display:inline-block;width:38.5px;font-size:17px;letter-spacing:1px">网址</span><span style="display:inline-block;width:17px">:</span><span style="letter-spacing:1.3px">www.chanjet.net</span></div><div style="position:absolute;left:1114.6px;top:235.5px;line-height:30px;font-size:18px;color:#000;white-space:nowrap;-webkit-text-stroke:0.55px #000"><span style="display:inline-block;width:38.5px;font-size:17px;letter-spacing:1px">电话</span><span style="display:inline-block;width:17px">:</span><span style="letter-spacing:3px">400-665-0028</span></div><div style="position:absolute;left:1114.6px;top:264.0px;line-height:30px;font-size:18px;color:#000;white-space:nowrap;-webkit-text-stroke:0.55px #000"><span style="display:inline-block;width:38.5px;font-size:17px;letter-spacing:1px">网址</span><span style="display:inline-block;width:17px">:</span><span style="letter-spacing:1.3px">www.chanjet.net</span></div><div style="position:absolute;left:1385.6px;top:235.5px;line-height:30px;font-size:18px;color:#000;white-space:nowrap;-webkit-text-stroke:0.55px #000"><span style="display:inline-block;width:38.5px;font-size:17px;letter-spacing:1px">电话</span><span style="display:inline-block;width:17px">:</span><span style="letter-spacing:3px">400-665-0028</span></div><div style="position:absolute;left:1385.6px;top:264.0px;line-height:30px;font-size:18px;color:#000;white-space:nowrap;-webkit-text-stroke:0.55px #000"><span style="display:inline-block;width:38.5px;font-size:17px;letter-spacing:1px">网址</span><span style="display:inline-block;width:17px">:</span><span style="letter-spacing:1.3px">www.chanjet.net</span></div><div style="position:absolute;left:1656.6px;top:235.5px;line-height:30px;font-size:18px;color:#000;white-space:nowrap;-webkit-text-stroke:0.55px #000"><span style="display:inline-block;width:38.5px;font-size:17px;letter-spacing:1px">电话</span><span style="display:inline-block;width:17px">:</span><span style="letter-spacing:3px">400-665-0028</span></div><div style="position:absolute;left:1656.6px;top:264.0px;line-height:30px;font-size:18px;color:#000;white-space:nowrap;-webkit-text-stroke:0.55px #000"><span style="display:inline-block;width:38.5px;font-size:17px;letter-spacing:1px">网址</span><span style="display:inline-block;width:17px">:</span><span style="letter-spacing:1.3px">www.chanjet.net</span></div><div style="position:absolute;left:30.6px;top:345.5px;line-height:30px;font-size:18px;color:#000;white-space:nowrap;-webkit-text-stroke:0.55px #000"><span style="display:inline-block;width:38.5px;font-size:17px;letter-spacing:1px">电话</span><span style="display:inline-block;width:17px">:</span><span style="letter-spacing:3px">400-665-0028</span></div><div style="position:absolute;left:30.6px;top:374.0px;line-height:30px;font-size:18px;color:#000;white-space:nowrap;-webkit-text-stroke:0.55px #000"><span style="display:inline-block;width:38.5px;font-size:17px;letter-spacing:1px">网址</span><span style="display:inline-block;width:17px">:</span><span style="letter-spacing:1.3px">www.chanjet.net</span></div><div style="position:absolute;left:301.6px;top:345.5px;line-height:30px;font-size:18px;color:#000;white-space:nowrap;-webkit-text-stroke:0.55px #000"><span style="display:inline-block;width:38.5px;font-size:17px;letter-spacing:1px">电话</span><span style="display:inline-block;width:17px">:</span><span style="letter-spacing:3px">400-665-0028</span></div><div style="position:absolute;left:301.6px;top:374.0px;line-height:30px;font-size:18px;color:#000;white-space:nowrap;-webkit-text-stroke:0.55px #000"><span style="display:inline-block;width:38.5px;font-size:17px;letter-spacing:1px">网址</span><span style="display:inline-block;width:17px">:</span><span style="letter-spacing:1.3px">www.chanjet.net</span></div><div style="position:absolute;left:572.6px;top:345.5px;line-height:30px;font-size:18px;color:#000;white-space:nowrap;-webkit-text-stroke:0.55px #000"><span style="display:inline-block;width:38.5px;font-size:17px;letter-spacing:1px">电话</span><span style="display:inline-block;width:17px">:</span><span style="letter-spacing:3px">400-665-0028</span></div><div style="position:absolute;left:572.6px;top:374.0px;line-height:30px;font-size:18px;color:#000;white-space:nowrap;-webkit-text-stroke:0.55px #000"><span style="display:inline-block;width:38.5px;font-size:17px;letter-spacing:1px">网址</span><span style="display:inline-block;width:17px">:</span><span style="letter-spacing:1.3px">www.chanjet.net</span></div><div style="position:absolute;left:843.6px;top:345.5px;line-height:30px;font-size:18px;color:#000;white-space:nowrap;-webkit-text-stroke:0.55px #000"><span style="display:inline-block;width:38.5px;font-size:17px;letter-spacing:1px">电话</span><span style="display:inline-block;width:17px">:</span><span style="letter-spacing:3px">400-665-0028</span></div><div style="position:absolute;left:843.6px;top:374.0px;line-height:30px;font-size:18px;color:#000;white-space:nowrap;-webkit-text-stroke:0.55px #000"><span style="display:inline-block;width:38.5px;font-size:17px;letter-spacing:1px">网址</span><span style="display:inline-block;width:17px">:</span><span style="letter-spacing:1.3px">www.chanjet.net</span></div><div style="position:absolute;left:1114.6px;top:345.5px;line-height:30px;font-size:18px;color:#000;white-space:nowrap;-webkit-text-stroke:0.55px #000"><span style="display:inline-block;width:38.5px;font-size:17px;letter-spacing:1px">电话</span><span style="display:inline-block;width:17px">:</span><span style="letter-spacing:3px">400-665-0028</span></div><div style="position:absolute;left:1114.6px;top:374.0px;line-height:30px;font-size:18px;color:#000;white-space:nowrap;-webkit-text-stroke:0.55px #000"><span style="display:inline-block;width:38.5px;font-size:17px;letter-spacing:1px">网址</span><span style="display:inline-block;width:17px">:</span><span style="letter-spacing:1.3px">www.chanjet.net</span></div><div style="position:absolute;left:1385.6px;top:345.5px;line-height:30px;font-size:18px;color:#000;white-space:nowrap;-webkit-text-stroke:0.55px #000"><span style="display:inline-block;width:38.5px;font-size:17px;letter-spacing:1px">电话</span><span style="display:inline-block;width:17px">:</span><span style="letter-spacing:3px">400-665-0028</span></div><div style="position:absolute;left:1385.6px;top:374.0px;line-height:30px;font-size:18px;color:#000;white-space:nowrap;-webkit-text-stroke:0.55px #000"><span style="display:inline-block;width:38.5px;font-size:17px;letter-spacing:1px">网址</span><span style="display:inline-block;width:17px">:</span><span style="letter-spacing:1.3px">www.chanjet.net</span></div><div style="position:absolute;left:1656.6px;top:345.5px;line-height:30px;font-size:18px;color:#000;white-space:nowrap;-webkit-text-stroke:0.55px #000"><span style="display:inline-block;width:38.5px;font-size:17px;letter-spacing:1px">电话</span><span style="display:inline-block;width:17px">:</span><span style="letter-spacing:3px">400-665-0028</span></div><div style="position:absolute;left:1656.6px;top:374.0px;line-height:30px;font-size:18px;color:#000;white-space:nowrap;-webkit-text-stroke:0.55px #000"><span style="display:inline-block;width:38.5px;font-size:17px;letter-spacing:1px">网址</span><span style="display:inline-block;width:17px">:</span><span style="letter-spacing:1.3px">www.chanjet.net</span></div><div style="position:absolute;left:30.6px;top:455.5px;line-height:30px;font-size:18px;color:#000;white-space:nowrap;-webkit-text-stroke:0.55px #000"><span style="display:inline-block;width:38.5px;font-size:17px;letter-spacing:1px">电话</span><span style="display:inline-block;width:17px">:</span><span style="letter-spacing:3px">400-665-0028</span></div><div style="position:absolute;left:30.6px;top:484.0px;line-height:30px;font-size:18px;color:#000;white-space:nowrap;-webkit-text-stroke:0.55px #000"><span style="display:inline-block;width:38.5px;font-size:17px;letter-spacing:1px">网址</span><span style="display:inline-block;width:17px">:</span><span style="letter-spacing:1.3px">www.chanjet.net</span></div><div style="position:absolute;left:301.6px;top:455.5px;line-height:30px;font-size:18px;color:#000;white-space:nowrap;-webkit-text-stroke:0.55px #000"><span style="display:inline-block;width:38.5px;font-size:17px;letter-spacing:1px">电话</span><span style="display:inline-block;width:17px">:</span><span style="letter-spacing:3px">400-665-0028</span></div><div style="position:absolute;left:301.6px;top:484.0px;line-height:30px;font-size:18px;color:#000;white-space:nowrap;-webkit-text-stroke:0.55px #000"><span style="display:inline-block;width:38.5px;font-size:17px;letter-spacing:1px">网址</span><span style="display:inline-block;width:17px">:</span><span style="letter-spacing:1.3px">www.chanjet.net</span></div><div style="position:absolute;left:572.6px;top:455.5px;line-height:30px;font-size:18px;color:#000;white-space:nowrap;-webkit-text-stroke:0.55px #000"><span style="display:inline-block;width:38.5px;font-size:17px;letter-spacing:1px">电话</span><span style="display:inline-block;width:17px">:</span><span style="letter-spacing:3px">400-665-0028</span></div><div style="position:absolute;left:572.6px;top:484.0px;line-height:30px;font-size:18px;color:#000;white-space:nowrap;-webkit-text-stroke:0.55px #000"><span style="display:inline-block;width:38.5px;font-size:17px;letter-spacing:1px">网址</span><span style="display:inline-block;width:17px">:</span><span style="letter-spacing:1.3px">www.chanjet.net</span></div><div style="position:absolute;left:843.6px;top:455.5px;line-height:30px;font-size:18px;color:#000;white-space:nowrap;-webkit-text-stroke:0.55px #000"><span style="display:inline-block;width:38.5px;font-size:17px;letter-spacing:1px">电话</span><span style="display:inline-block;width:17px">:</span><span style="letter-spacing:3px">400-665-0028</span></div><div style="position:absolute;left:843.6px;top:484.0px;line-height:30px;font-size:18px;color:#000;white-space:nowrap;-webkit-text-stroke:0.55px #000"><span style="display:inline-block;width:38.5px;font-size:17px;letter-spacing:1px">网址</span><span style="display:inline-block;width:17px">:</span><span style="letter-spacing:1.3px">www.chanjet.net</span></div><div style="position:absolute;left:1114.6px;top:455.5px;line-height:30px;font-size:18px;color:#000;white-space:nowrap;-webkit-text-stroke:0.55px #000"><span style="display:inline-block;width:38.5px;font-size:17px;letter-spacing:1px">电话</span><span style="display:inline-block;width:17px">:</span><span style="letter-spacing:3px">400-665-0028</span></div><div style="position:absolute;left:1114.6px;top:484.0px;line-height:30px;font-size:18px;color:#000;white-space:nowrap;-webkit-text-stroke:0.55px #000"><span style="display:inline-block;width:38.5px;font-size:17px;letter-spacing:1px">网址</span><span style="display:inline-block;width:17px">:</span><span style="letter-spacing:1.3px">www.chanjet.net</span></div><div style="position:absolute;left:1385.6px;top:455.5px;line-height:30px;font-size:18px;color:#000;white-space:nowrap;-webkit-text-stroke:0.55px #000"><span style="display:inline-block;width:38.5px;font-size:17px;letter-spacing:1px">电话</span><span style="display:inline-block;width:17px">:</span><span style="letter-spacing:3px">400-665-0028</span></div><div style="position:absolute;left:1385.6px;top:484.0px;line-height:30px;font-size:18px;color:#000;white-space:nowrap;-webkit-text-stroke:0.55px #000"><span style="display:inline-block;width:38.5px;font-size:17px;letter-spacing:1px">网址</span><span style="display:inline-block;width:17px">:</span><span style="letter-spacing:1.3px">www.chanjet.net</span></div><div style="position:absolute;left:1656.6px;top:455.5px;line-height:30px;font-size:18px;color:#000;white-space:nowrap;-webkit-text-stroke:0.55px #000"><span style="display:inline-block;width:38.5px;font-size:17px;letter-spacing:1px">电话</span><span style="display:inline-block;width:17px">:</span><span style="letter-spacing:3px">400-665-0028</span></div><div style="position:absolute;left:1656.6px;top:484.0px;line-height:30px;font-size:18px;color:#000;white-space:nowrap;-webkit-text-stroke:0.55px #000"><span style="display:inline-block;width:38.5px;font-size:17px;letter-spacing:1px">网址</span><span style="display:inline-block;width:17px">:</span><span style="letter-spacing:1.3px">www.chanjet.net</span></div><div style="position:absolute;left:30.6px;top:565.5px;line-height:30px;font-size:18px;color:#000;white-space:nowrap;-webkit-text-stroke:0.55px #000"><span style="display:inline-block;width:38.5px;font-size:17px;letter-spacing:1px">电话</span><span style="display:inline-block;width:17px">:</span><span style="letter-spacing:3px">400-665-0028</span></div><div style="position:absolute;left:30.6px;top:594.0px;line-height:30px;font-size:18px;color:#000;white-space:nowrap;-webkit-text-stroke:0.55px #000"><span style="display:inline-block;width:38.5px;font-size:17px;letter-spacing:1px">网址</span><span style="display:inline-block;width:17px">:</span><span style="letter-spacing:1.3px">www.chanjet.net</span></div><div style="position:absolute;left:301.6px;top:565.5px;line-height:30px;font-size:18px;color:#000;white-space:nowrap;-webkit-text-stroke:0.55px #000"><span style="display:inline-block;width:38.5px;font-size:17px;letter-spacing:1px">电话</span><span style="display:inline-block;width:17px">:</span><span style="letter-spacing:3px">400-665-0028</span></div><div style="position:absolute;left:301.6px;top:594.0px;line-height:30px;font-size:18px;color:#000;white-space:nowrap;-webkit-text-stroke:0.55px #000"><span style="display:inline-block;width:38.5px;font-size:17px;letter-spacing:1px">网址</span><span style="display:inline-block;width:17px">:</span><span style="letter-spacing:1.3px">www.chanjet.net</span></div><div style="position:absolute;left:572.6px;top:565.5px;line-height:30px;font-size:18px;color:#000;white-space:nowrap;-webkit-text-stroke:0.55px #000"><span style="display:inline-block;width:38.5px;font-size:17px;letter-spacing:1px">电话</span><span style="display:inline-block;width:17px">:</span><span style="letter-spacing:3px">400-665-0028</span></div><div style="position:absolute;left:572.6px;top:594.0px;line-height:30px;font-size:18px;color:#000;white-space:nowrap;-webkit-text-stroke:0.55px #000"><span style="display:inline-block;width:38.5px;font-size:17px;letter-spacing:1px">网址</span><span style="display:inline-block;width:17px">:</span><span style="letter-spacing:1.3px">www.chanjet.net</span></div><div style="position:absolute;left:843.6px;top:565.5px;line-height:30px;font-size:18px;color:#000;white-space:nowrap;-webkit-text-stroke:0.55px #000"><span style="display:inline-block;width:38.5px;font-size:17px;letter-spacing:1px">电话</span><span style="display:inline-block;width:17px">:</span><span style="letter-spacing:3px">400-665-0028</span></div><div style="position:absolute;left:843.6px;top:594.0px;line-height:30px;font-size:18px;color:#000;white-space:nowrap;-webkit-text-stroke:0.55px #000"><span style="display:inline-block;width:38.5px;font-size:17px;letter-spacing:1px">网址</span><span style="display:inline-block;width:17px">:</span><span style="letter-spacing:1.3px">www.chanjet.net</span></div><div style="position:absolute;left:1114.6px;top:565.5px;line-height:30px;font-size:18px;color:#000;white-space:nowrap;-webkit-text-stroke:0.55px #000"><span style="display:inline-block;width:38.5px;font-size:17px;letter-spacing:1px">电话</span><span style="display:inline-block;width:17px">:</span><span style="letter-spacing:3px">400-665-0028</span></div><div style="position:absolute;left:1114.6px;top:594.0px;line-height:30px;font-size:18px;color:#000;white-space:nowrap;-webkit-text-stroke:0.55px #000"><span style="display:inline-block;width:38.5px;font-size:17px;letter-spacing:1px">网址</span><span style="display:inline-block;width:17px">:</span><span style="letter-spacing:1.3px">www.chanjet.net</span></div><div style="position:absolute;left:1385.6px;top:565.5px;line-height:30px;font-size:18px;color:#000;white-space:nowrap;-webkit-text-stroke:0.55px #000"><span style="display:inline-block;width:38.5px;font-size:17px;letter-spacing:1px">电话</span><span style="display:inline-block;width:17px">:</span><span style="letter-spacing:3px">400-665-0028</span></div><div style="position:absolute;left:1385.6px;top:594.0px;line-height:30px;font-size:18px;color:#000;white-space:nowrap;-webkit-text-stroke:0.55px #000"><span style="display:inline-block;width:38.5px;font-size:17px;letter-spacing:1px">网址</span><span style="display:inline-block;width:17px">:</span><span style="letter-spacing:1.3px">www.chanjet.net</span></div><div style="position:absolute;left:1656.6px;top:565.5px;line-height:30px;font-size:18px;color:#000;white-space:nowrap;-webkit-text-stroke:0.55px #000"><span style="display:inline-block;width:38.5px;font-size:17px;letter-spacing:1px">电话</span><span style="display:inline-block;width:17px">:</span><span style="letter-spacing:3px">400-665-0028</span></div><div style="position:absolute;left:1656.6px;top:594.0px;line-height:30px;font-size:18px;color:#000;white-space:nowrap;-webkit-text-stroke:0.55px #000"><span style="display:inline-block;width:38.5px;font-size:17px;letter-spacing:1px">网址</span><span style="display:inline-block;width:17px">:</span><span style="letter-spacing:1.3px">www.chanjet.net</span></div></div>
<svg style="position:absolute;left:0;top:0" width="1864" height="682"><path d="M1449.6 572.5 L1648.6 148 L1644.5 143 L1659.8 133.8 L1661 151.2 L1655.3 154 L1451.6 572.5 Z" fill="#f5221b"/></svg>
</body></html>
